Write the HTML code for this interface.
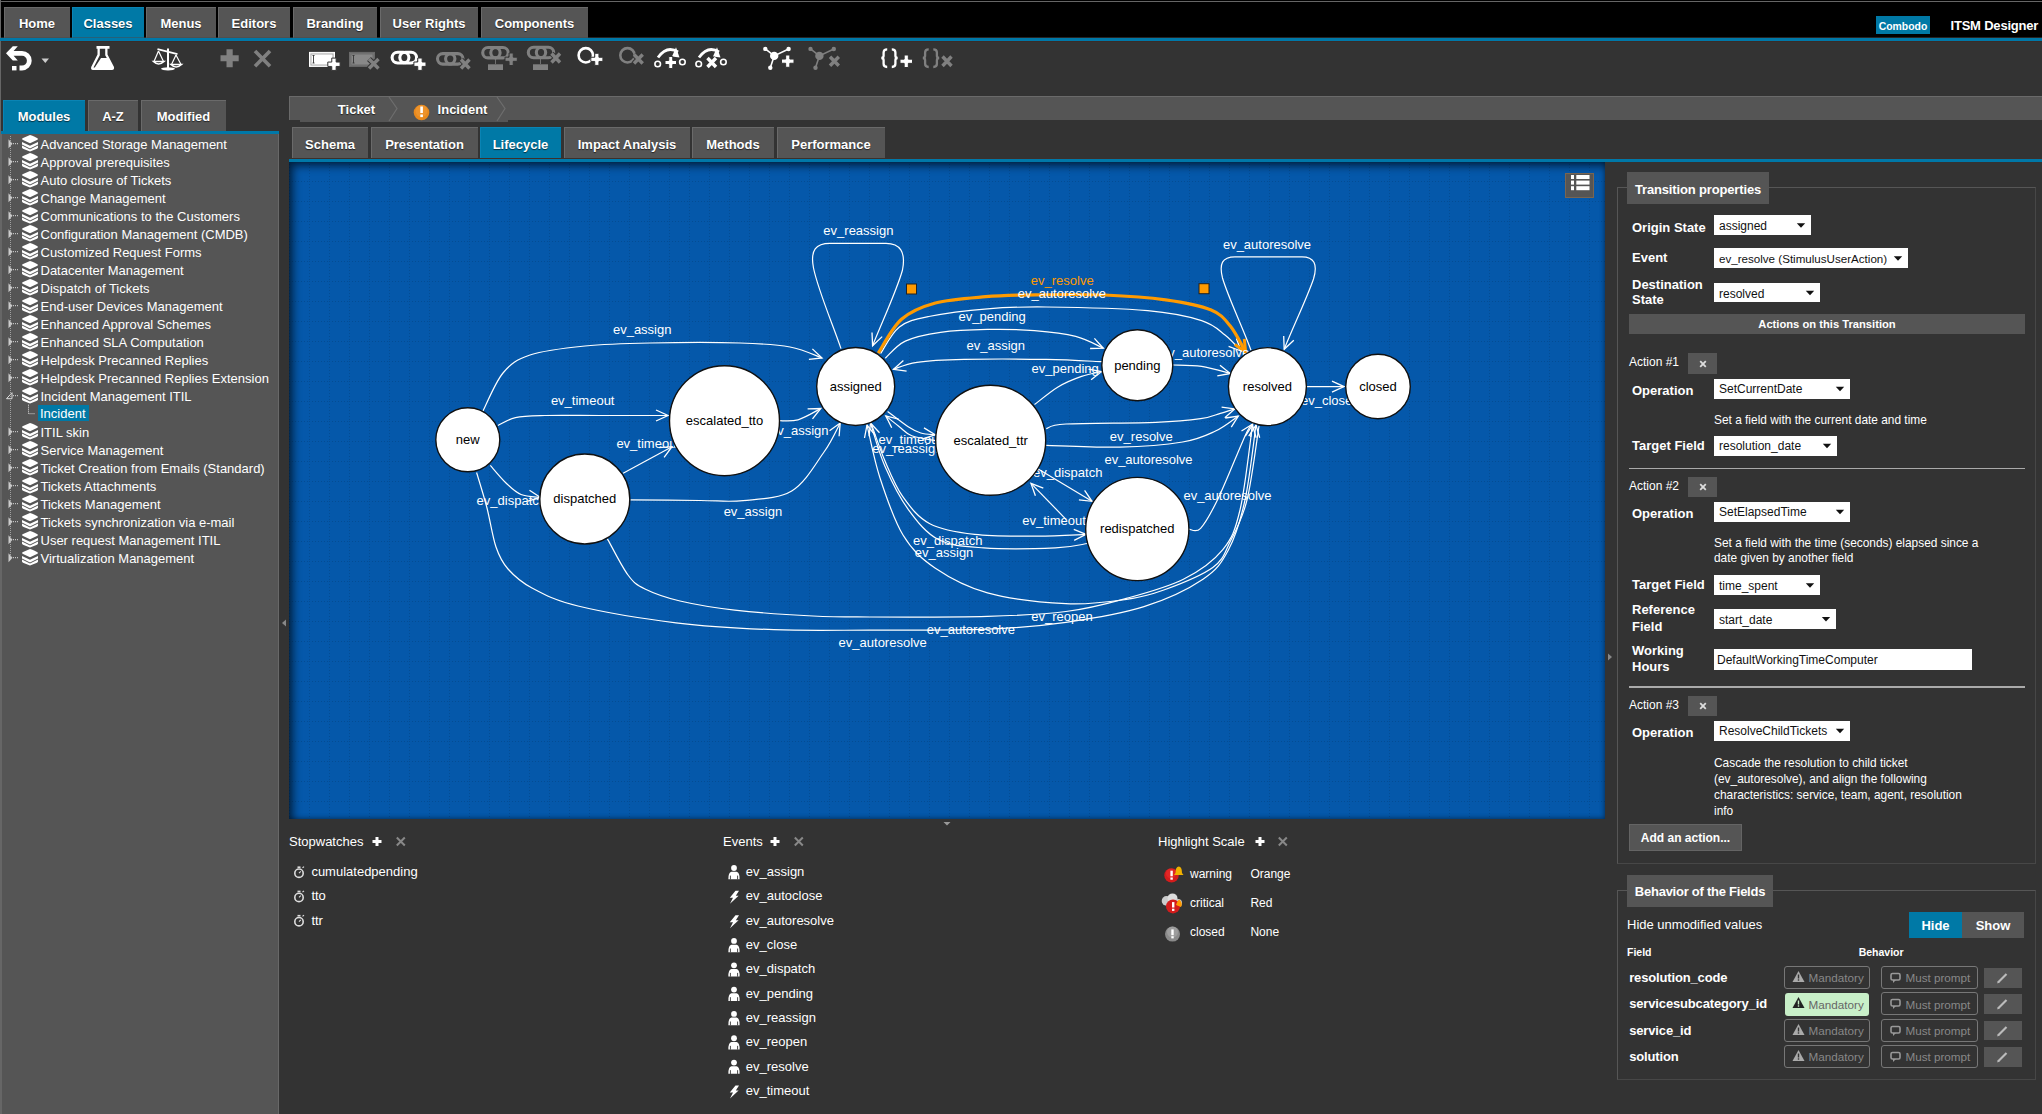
<!DOCTYPE html>
<html><head><meta charset="utf-8"><title>ITSM Designer</title>
<style>
html,body{margin:0;padding:0;}
body{width:2042px;height:1114px;overflow:hidden;position:relative;background:#333;font-family:'Liberation Sans',sans-serif;}
</style></head><body>
<div style="position:absolute;left:0px;top:0px;width:2042px;height:38px;background:#000"></div>
<div style="position:absolute;left:0px;top:1px;width:2042px;height:1px;background:#666"></div>
<div style="position:absolute;left:0px;top:0px;width:1px;height:1114px;background:#666"></div>
<div style="position:absolute;left:4px;top:7px;width:66px;height:31px;background:#555;border-top:1px solid #6a6a6a;border-left:1px solid #6a6a6a;box-sizing:border-box"></div>
<div style="position:absolute;left:-363.00px;top:16.80px;width:800px;text-align:center;font:bold 13px/13px 'Liberation Sans', sans-serif;color:#fff;white-space:nowrap;text-shadow:0 1px 1px rgba(0,0,0,.6);">Home</div>
<div style="position:absolute;left:72px;top:7px;width:72px;height:31px;background:#0079a6;border-top:1px solid #0a84b4;border-left:1px solid #0a84b4;box-sizing:border-box"></div>
<div style="position:absolute;left:-292.00px;top:16.80px;width:800px;text-align:center;font:bold 13px/13px 'Liberation Sans', sans-serif;color:#fff;white-space:nowrap;text-shadow:0 1px 1px rgba(0,0,0,.6);">Classes</div>
<div style="position:absolute;left:146px;top:7px;width:70px;height:31px;background:#555;border-top:1px solid #6a6a6a;border-left:1px solid #6a6a6a;box-sizing:border-box"></div>
<div style="position:absolute;left:-219.00px;top:16.80px;width:800px;text-align:center;font:bold 13px/13px 'Liberation Sans', sans-serif;color:#fff;white-space:nowrap;text-shadow:0 1px 1px rgba(0,0,0,.6);">Menus</div>
<div style="position:absolute;left:218px;top:7px;width:72px;height:31px;background:#555;border-top:1px solid #6a6a6a;border-left:1px solid #6a6a6a;box-sizing:border-box"></div>
<div style="position:absolute;left:-146.00px;top:16.80px;width:800px;text-align:center;font:bold 13px/13px 'Liberation Sans', sans-serif;color:#fff;white-space:nowrap;text-shadow:0 1px 1px rgba(0,0,0,.6);">Editors</div>
<div style="position:absolute;left:293px;top:7px;width:84px;height:31px;background:#555;border-top:1px solid #6a6a6a;border-left:1px solid #6a6a6a;box-sizing:border-box"></div>
<div style="position:absolute;left:-65.00px;top:16.80px;width:800px;text-align:center;font:bold 13px/13px 'Liberation Sans', sans-serif;color:#fff;white-space:nowrap;text-shadow:0 1px 1px rgba(0,0,0,.6);">Branding</div>
<div style="position:absolute;left:380px;top:7px;width:98px;height:31px;background:#555;border-top:1px solid #6a6a6a;border-left:1px solid #6a6a6a;box-sizing:border-box"></div>
<div style="position:absolute;left:29.00px;top:16.80px;width:800px;text-align:center;font:bold 13px/13px 'Liberation Sans', sans-serif;color:#fff;white-space:nowrap;text-shadow:0 1px 1px rgba(0,0,0,.6);">User Rights</div>
<div style="position:absolute;left:481px;top:7px;width:107px;height:31px;background:#555;border-top:1px solid #6a6a6a;border-left:1px solid #6a6a6a;box-sizing:border-box"></div>
<div style="position:absolute;left:134.50px;top:16.80px;width:800px;text-align:center;font:bold 13px/13px 'Liberation Sans', sans-serif;color:#fff;white-space:nowrap;text-shadow:0 1px 1px rgba(0,0,0,.6);">Components</div>
<div style="position:absolute;left:0px;top:38px;width:2042px;height:3px;background:#0078a8"></div>
<div style="position:absolute;left:1px;top:37px;width:2041px;height:1px;background:#4a4a4a;opacity:.5"></div>
<div style="position:absolute;left:1px;top:41px;width:2041px;height:1px;background:#3a2c28"></div>
<div style="position:absolute;left:1876px;top:16px;width:54px;height:18px;background:#0079a6"></div>
<div style="position:absolute;left:1503.00px;top:21.50px;width:800px;text-align:center;font:bold 10.4px/10.4px 'Liberation Sans', sans-serif;color:#fff;white-space:nowrap;">Combodo</div>
<div style="position:absolute;left:1950.50px;top:19.00px;font:bold 13px/13px 'Liberation Sans', sans-serif;color:#fff;white-space:nowrap;letter-spacing:-0.2px">ITSM Designer</div>
<svg style="position:absolute;left:0px;top:42px;" width="980" height="40" viewBox="0 42 980 40"><path d="M6 53.3 L12.8 46.2 L17.8 46.2 L13.6 51 L22 51 A9.6 9.6 0 0 1 22 70.4 L19.5 70.4 L19.5 65.6 L22 65.6 A4.9 4.9 0 0 0 22 55.8 L13.6 55.8 L17.8 60.4 L12.8 60.4 Z" fill="#fff"/><rect x="12" y="66" width="4.5" height="4.4" fill="#fff"/><path d="M41.5 58.5 L49 58.5 L45.3 63 Z" fill="#ccc"/><path d="M96.5 46 H109.5 V48.8 H107.5 V54.5 L114 67 Q114.5 70 112 70 H93 Q90.5 70 91.2 67 L97.5 54.5 V48.8 H96.5 Z" fill="#fff"/><path d="M99.8 48.8 H105.2 V55.2 L106.8 58 L101 58 L94.8 67.6 L93.5 67.6 L99.8 55.2 Z" fill="#333"/><rect x="167" y="48.5" width="2" height="20" fill="#fff"/><ellipse cx="168" cy="68.8" rx="7" ry="1.6" fill="#fff"/><path d="M157.5 49.2 L177.5 54.2" stroke="#fff" stroke-width="1.8"/><path d="M158.5 51 L154 61.5 M158.5 51 L163.5 61.5 M176 55 L171.5 64.5 M176 55 L181 64.5" stroke="#fff" stroke-width="1.2" fill="none"/><path d="M153.5 61.5 Q158.5 66.5 164 61.5 Z M171 64.5 Q176 69.5 181.5 64.5 Z" fill="none" stroke="#fff" stroke-width="1.6"/><path d="M226.5 49.2 H232.7 V55.2 H238.7 V61.2 H232.7 V67.2 H226.5 V61.2 H220.5 V55.2 H226.5 Z" fill="#808080"/><path d="M255 51 L270 66.3 M270 51 L255 66.3" stroke="#808080" stroke-width="3.6"/><rect x="309.5" y="52.4" width="25" height="14" fill="#eee" stroke="#fff" stroke-width="1"/><rect x="311" y="54" width="22" height="11" fill="#fff" stroke="#999" stroke-width="0.8"/><path d="M313.5 55.5 V63 M312.5 55.5 H314.5 M312.5 63 H314.5" stroke="#333" stroke-width="0.9"/><path d="M331.75000000000006 58.1 H336.15000000000003 V62.05 H340.1 V66.45 H336.15000000000003 V70.4 H331.75000000000006 V66.45 H327.8 V62.05 H331.75000000000006 Z" fill="#fff" stroke="#333" stroke-width="1"/><rect x="349.5" y="52.4" width="25" height="14" fill="#777" stroke="#6a6a6a" stroke-width="1"/><rect x="351" y="54" width="22" height="11" fill="#888" stroke="#666" stroke-width="0.8"/><path d="M353.5 55.5 V63 M352.5 55.5 H354.5 M352.5 63 H354.5" stroke="#333" stroke-width="0.9"/><path d="M369.0 59.0 L378.5 68.5 M378.5 59.0 L369.0 68.5" stroke="#333" stroke-width="5.4"/><path d="M369.0 59.0 L378.5 68.5 M378.5 59.0 L369.0 68.5" stroke="#808080" stroke-width="3.4"/><rect x="392.1" y="52.199999999999996" width="16.80199999999998" height="10.799999999999999" rx="5.499999999999999" fill="none" stroke="#fff" stroke-width="3.1"/><rect x="399.798" y="52.199999999999996" width="16.80199999999998" height="10.799999999999999" rx="5.499999999999999" fill="none" stroke="#fff" stroke-width="3.1"/><path d="M417.75 58 H422.15 V62.0 H426 V66.4 H422.15 V70.4 H417.75 V66.4 H413.9 V62.0 H417.75 Z" fill="#fff" stroke="#333" stroke-width="1"/><rect x="437.5" y="53.599999999999994" width="17.422000000000015" height="10.500000000000009" rx="5.350000000000004" fill="none" stroke="#808080" stroke-width="3.1"/><rect x="445.578" y="53.599999999999994" width="17.422000000000015" height="10.500000000000009" rx="5.350000000000004" fill="none" stroke="#808080" stroke-width="3.1"/><path d="M461.0 59.5 L469.5 68.5 M469.5 59.5 L461.0 68.5" stroke="#333" stroke-width="5.4"/><path d="M461.0 59.5 L469.5 68.5 M469.5 59.5 L461.0 68.5" stroke="#808080" stroke-width="3.4"/><rect x="482.7" y="47.5" width="17.422000000000015" height="10.4" rx="5.3" fill="none" stroke="#808080" stroke-width="3.1"/><rect x="490.77799999999996" y="47.5" width="17.422000000000015" height="10.4" rx="5.3" fill="none" stroke="#808080" stroke-width="3.1"/><path d="M509.04999999999995 53 H513.25 V57.15 H517.3 V61.35 H513.25 V65.5 H509.04999999999995 V61.35 H505 V57.15 H509.04999999999995 Z" fill="#808080" stroke="#333" stroke-width="1"/><rect x="488" y="64.3" width="15" height="5.7" fill="#808080"/><path d="M495.5 59 V64" stroke="#808080" stroke-width="0.8"/><rect x="528.3" y="47.3" width="17.36" height="10.4" rx="5.3" fill="none" stroke="#808080" stroke-width="3.1"/><rect x="536.34" y="47.3" width="17.36" height="10.4" rx="5.3" fill="none" stroke="#808080" stroke-width="3.1"/><path d="M551.5 53.5 L560.0 62.5 M560.0 53.5 L551.5 62.5" stroke="#333" stroke-width="5.4"/><path d="M551.5 53.5 L560.0 62.5 M560.0 53.5 L551.5 62.5" stroke="#808080" stroke-width="3.4"/><rect x="533" y="64.3" width="15" height="5.7" fill="#808080"/><path d="M540.5 59 V64" stroke="#808080" stroke-width="0.8"/><circle cx="585.8" cy="55.3" r="7.2" fill="none" stroke="#fff" stroke-width="2.6"/><path d="M594.7499999999999 53.3 H598.9499999999999 V57.25 H602.9 V61.45 H598.9499999999999 V65.4 H594.7499999999999 V61.45 H590.8 V57.25 H594.7499999999999 Z" fill="#fff" stroke="#333" stroke-width="1"/><circle cx="627.5" cy="55.3" r="7.2" fill="none" stroke="#808080" stroke-width="2.6"/><path d="M634.0 54.5 L642.7 63.5 M642.7 54.5 L634.0 63.5" stroke="#333" stroke-width="5.4"/><path d="M634.0 54.5 L642.7 63.5 M642.7 54.5 L634.0 63.5" stroke="#808080" stroke-width="3.4"/><path d="M658 57.5 Q667 45 678 52" fill="none" stroke="#fff" stroke-width="2.8"/><path d="M676 47.3 L679.5 57.5 L672 56.5 Z" fill="#fff"/><circle cx="657.7" cy="64" r="2.8" fill="none" stroke="#fff" stroke-width="1.6"/><circle cx="682.4" cy="62" r="2.8" fill="none" stroke="#fff" stroke-width="1.6"/><path d="M668.75 56.5 H672.75 V60.5 H676.5 V64.5 H672.75 V68.5 H668.75 V64.5 H665 V60.5 H668.75 Z" fill="#fff" stroke="#333" stroke-width="1"/><path d="M699 57.5 Q708 45 719 52" fill="none" stroke="#fff" stroke-width="2.8"/><path d="M717 47.3 L720.5 57.5 L713 56.5 Z" fill="#fff"/><circle cx="698.7" cy="64" r="2.8" fill="none" stroke="#fff" stroke-width="1.6"/><circle cx="723.4" cy="62" r="2.8" fill="none" stroke="#fff" stroke-width="1.6"/><path d="M707.5 58.0 L716.0 67.0 M716.0 58.0 L707.5 67.0" stroke="#333" stroke-width="5.4"/><path d="M707.5 58.0 L716.0 67.0 M716.0 58.0 L707.5 67.0" stroke="#fff" stroke-width="3.4"/><path d="M765.3 48.9 L774.2 55.9 L788.6 49 M774.2 55.9 L770.3 67.8" fill="none" stroke="#fff" stroke-width="1.6"/><circle cx="774.2" cy="55.9" r="4.2" fill="#fff"/><circle cx="765.3" cy="48.9" r="2.2" fill="#fff"/><circle cx="788.6" cy="49" r="2.2" fill="#fff"/><circle cx="770.3" cy="67.8" r="2.2" fill="#fff"/><path d="M785.65 55 H789.85 V59.05 H794 V63.25 H789.85 V67.3 H785.65 V63.25 H781.5 V59.05 H785.65 Z" fill="#fff" stroke="#333" stroke-width="1"/><path d="M810.5 48.9 L819.4000000000001 55.9 L833.8000000000001 49 M819.4000000000001 55.9 L815.5 67.8" fill="none" stroke="#808080" stroke-width="1.6"/><circle cx="819.4000000000001" cy="55.9" r="4.2" fill="#808080"/><circle cx="810.5" cy="48.9" r="2.2" fill="#808080"/><circle cx="833.8000000000001" cy="49" r="2.2" fill="#808080"/><circle cx="815.5" cy="67.8" r="2.2" fill="#808080"/><path d="M830.0 56.8 L838.8 65.8 M838.8 56.8 L830.0 65.8" stroke="#333" stroke-width="5.4"/><path d="M830.0 56.8 L838.8 65.8 M838.8 56.8 L830.0 65.8" stroke="#808080" stroke-width="3.4"/><path d="M887.2 49.3 Q883.6 49.3 883.6 52.5 L883.6 55.8 Q883.6 58 881.3 58 Q883.6 58 883.6 60.2 L883.6 63.8 Q883.6 67 887.2 67" fill="none" stroke="#fff" stroke-width="2.3"/><path d="M891.8 49.3 Q895.4 49.3 895.4 52.5 L895.4 55.8 Q895.4 58 897.7 58 Q895.4 58 895.4 60.2 L895.4 63.8 Q895.4 67 891.8 67" fill="none" stroke="#fff" stroke-width="2.3"/><path d="M904.15 55 H908.35 V59.15 H912.5 V63.35 H908.35 V67.5 H904.15 V63.35 H900 V59.15 H904.15 Z" fill="#fff" stroke="#333" stroke-width="1"/><path d="M928.7 49.3 Q925.1 49.3 925.1 52.5 L925.1 55.8 Q925.1 58 922.8 58 Q925.1 58 925.1 60.2 L925.1 63.8 Q925.1 67 928.7 67" fill="none" stroke="#808080" stroke-width="2.3"/><path d="M933.3 49.3 Q936.9 49.3 936.9 52.5 L936.9 55.8 Q936.9 58 939.2 58 Q936.9 58 936.9 60.2 L936.9 63.8 Q936.9 67 933.3 67" fill="none" stroke="#808080" stroke-width="2.3"/><path d="M942.5 56.5 L951.5 66.0 M951.5 56.5 L942.5 66.0" stroke="#333" stroke-width="5.4"/><path d="M942.5 56.5 L951.5 66.0 M951.5 56.5 L942.5 66.0" stroke="#808080" stroke-width="3.4"/></svg>
<div style="position:absolute;left:3px;top:100px;width:82px;height:31px;background:#0079a6;border-top:1px solid #0a84b4;border-left:1px solid #0a84b4;box-sizing:border-box"></div>
<div style="position:absolute;left:-356.00px;top:109.50px;width:800px;text-align:center;font:bold 13px/13px 'Liberation Sans', sans-serif;color:#fff;white-space:nowrap;text-shadow:0 1px 1px rgba(0,0,0,.6);">Modules</div>
<div style="position:absolute;left:88px;top:100px;width:50px;height:31px;background:#555;border-top:1px solid #6a6a6a;border-left:1px solid #6a6a6a;box-sizing:border-box"></div>
<div style="position:absolute;left:-287.00px;top:109.50px;width:800px;text-align:center;font:bold 13px/13px 'Liberation Sans', sans-serif;color:#fff;white-space:nowrap;text-shadow:0 1px 1px rgba(0,0,0,.6);">A-Z</div>
<div style="position:absolute;left:141px;top:100px;width:85px;height:31px;background:#555;border-top:1px solid #6a6a6a;border-left:1px solid #6a6a6a;box-sizing:border-box"></div>
<div style="position:absolute;left:-216.50px;top:109.50px;width:800px;text-align:center;font:bold 13px/13px 'Liberation Sans', sans-serif;color:#fff;white-space:nowrap;text-shadow:0 1px 1px rgba(0,0,0,.6);">Modified</div>
<div style="position:absolute;left:1px;top:131px;width:278px;height:3px;background:#0078a8"></div>
<div style="position:absolute;left:1px;top:134px;width:278px;height:980px;background:#555"></div>
<div style="position:absolute;left:0px;top:134px;width:2px;height:980px;background:#666"></div>
<div style="position:absolute;left:278px;top:134px;width:1px;height:980px;background:#686868"></div>
<div style="position:absolute;left:40.50px;top:137.70px;font:normal 13px/13px 'Liberation Sans', sans-serif;color:#fff;white-space:nowrap;">Advanced Storage Management</div>
<div style="position:absolute;left:40.50px;top:155.70px;font:normal 13px/13px 'Liberation Sans', sans-serif;color:#fff;white-space:nowrap;">Approval prerequisites</div>
<div style="position:absolute;left:40.50px;top:173.70px;font:normal 13px/13px 'Liberation Sans', sans-serif;color:#fff;white-space:nowrap;">Auto closure of Tickets</div>
<div style="position:absolute;left:40.50px;top:191.70px;font:normal 13px/13px 'Liberation Sans', sans-serif;color:#fff;white-space:nowrap;">Change Management</div>
<div style="position:absolute;left:40.50px;top:209.70px;font:normal 13px/13px 'Liberation Sans', sans-serif;color:#fff;white-space:nowrap;">Communications to the Customers</div>
<div style="position:absolute;left:40.50px;top:227.70px;font:normal 13px/13px 'Liberation Sans', sans-serif;color:#fff;white-space:nowrap;">Configuration Management (CMDB)</div>
<div style="position:absolute;left:40.50px;top:245.70px;font:normal 13px/13px 'Liberation Sans', sans-serif;color:#fff;white-space:nowrap;">Customized Request Forms</div>
<div style="position:absolute;left:40.50px;top:263.70px;font:normal 13px/13px 'Liberation Sans', sans-serif;color:#fff;white-space:nowrap;">Datacenter Management</div>
<div style="position:absolute;left:40.50px;top:281.70px;font:normal 13px/13px 'Liberation Sans', sans-serif;color:#fff;white-space:nowrap;">Dispatch of Tickets</div>
<div style="position:absolute;left:40.50px;top:299.70px;font:normal 13px/13px 'Liberation Sans', sans-serif;color:#fff;white-space:nowrap;">End-user Devices Management</div>
<div style="position:absolute;left:40.50px;top:317.70px;font:normal 13px/13px 'Liberation Sans', sans-serif;color:#fff;white-space:nowrap;">Enhanced Approval Schemes</div>
<div style="position:absolute;left:40.50px;top:335.70px;font:normal 13px/13px 'Liberation Sans', sans-serif;color:#fff;white-space:nowrap;">Enhanced SLA Computation</div>
<div style="position:absolute;left:40.50px;top:353.70px;font:normal 13px/13px 'Liberation Sans', sans-serif;color:#fff;white-space:nowrap;">Helpdesk Precanned Replies</div>
<div style="position:absolute;left:40.50px;top:371.70px;font:normal 13px/13px 'Liberation Sans', sans-serif;color:#fff;white-space:nowrap;">Helpdesk Precanned Replies Extension</div>
<div style="position:absolute;left:40.50px;top:389.70px;font:normal 13px/13px 'Liberation Sans', sans-serif;color:#fff;white-space:nowrap;">Incident Management ITIL</div>
<div style="position:absolute;left:38px;top:404.5px;width:51px;height:16px;background:#0079a6"></div>
<div style="position:absolute;left:40.00px;top:406.70px;font:normal 13px/13px 'Liberation Sans', sans-serif;color:#fff;white-space:nowrap;">Incident</div>
<div style="position:absolute;left:40.50px;top:425.70px;font:normal 13px/13px 'Liberation Sans', sans-serif;color:#fff;white-space:nowrap;">ITIL skin</div>
<div style="position:absolute;left:40.50px;top:443.70px;font:normal 13px/13px 'Liberation Sans', sans-serif;color:#fff;white-space:nowrap;">Service Management</div>
<div style="position:absolute;left:40.50px;top:461.70px;font:normal 13px/13px 'Liberation Sans', sans-serif;color:#fff;white-space:nowrap;">Ticket Creation from Emails (Standard)</div>
<div style="position:absolute;left:40.50px;top:479.70px;font:normal 13px/13px 'Liberation Sans', sans-serif;color:#fff;white-space:nowrap;">Tickets Attachments</div>
<div style="position:absolute;left:40.50px;top:497.70px;font:normal 13px/13px 'Liberation Sans', sans-serif;color:#fff;white-space:nowrap;">Tickets Management</div>
<div style="position:absolute;left:40.50px;top:515.70px;font:normal 13px/13px 'Liberation Sans', sans-serif;color:#fff;white-space:nowrap;">Tickets synchronization via e-mail</div>
<div style="position:absolute;left:40.50px;top:533.70px;font:normal 13px/13px 'Liberation Sans', sans-serif;color:#fff;white-space:nowrap;">User request Management ITIL</div>
<div style="position:absolute;left:40.50px;top:551.70px;font:normal 13px/13px 'Liberation Sans', sans-serif;color:#fff;white-space:nowrap;">Virtualization Management</div>
<svg style="position:absolute;left:0px;top:134px;" width="279" height="440" viewBox="0 134 279 440"><path d="M30 135.0 Q31 135.0 37.5 138.2 Q38.3 139.0 37.5 139.8 L30 143.2 L22.5 139.8 Q21.7 139.0 22.5 138.2 Z" fill="#fff"/><path d="M22 142.0 L30 145.8 L38 142.0 L38 144.6 L30 148.4 L22 144.6 Z" fill="#fff"/><path d="M22 145.6 L30 149.4 L38 145.6 L38 147.6 Q38 148.2 37 148.7 L30 151.6 L23 148.7 Q22 148.2 22 147.6 Z" fill="#fff"/><path d="M13 143.7 H18" stroke="#ddd" stroke-width="1" stroke-dasharray="1 1"/><path d="M8.5 139.2 L12.5 143.7 L8.5 148.2 Z" fill="#ccc"/><path d="M30 153.0 Q31 153.0 37.5 156.2 Q38.3 157.0 37.5 157.8 L30 161.2 L22.5 157.8 Q21.7 157.0 22.5 156.2 Z" fill="#fff"/><path d="M22 160.0 L30 163.8 L38 160.0 L38 162.6 L30 166.4 L22 162.6 Z" fill="#fff"/><path d="M22 163.6 L30 167.4 L38 163.6 L38 165.6 Q38 166.2 37 166.7 L30 169.6 L23 166.7 Q22 166.2 22 165.6 Z" fill="#fff"/><path d="M13 161.7 H18" stroke="#ddd" stroke-width="1" stroke-dasharray="1 1"/><path d="M8.5 157.2 L12.5 161.7 L8.5 166.2 Z" fill="#ccc"/><path d="M30 171.0 Q31 171.0 37.5 174.2 Q38.3 175.0 37.5 175.8 L30 179.2 L22.5 175.8 Q21.7 175.0 22.5 174.2 Z" fill="#fff"/><path d="M22 178.0 L30 181.8 L38 178.0 L38 180.6 L30 184.4 L22 180.6 Z" fill="#fff"/><path d="M22 181.6 L30 185.4 L38 181.6 L38 183.6 Q38 184.2 37 184.7 L30 187.6 L23 184.7 Q22 184.2 22 183.6 Z" fill="#fff"/><path d="M13 179.7 H18" stroke="#ddd" stroke-width="1" stroke-dasharray="1 1"/><path d="M8.5 175.2 L12.5 179.7 L8.5 184.2 Z" fill="#ccc"/><path d="M30 189.0 Q31 189.0 37.5 192.2 Q38.3 193.0 37.5 193.8 L30 197.2 L22.5 193.8 Q21.7 193.0 22.5 192.2 Z" fill="#fff"/><path d="M22 196.0 L30 199.8 L38 196.0 L38 198.6 L30 202.4 L22 198.6 Z" fill="#fff"/><path d="M22 199.6 L30 203.4 L38 199.6 L38 201.6 Q38 202.2 37 202.7 L30 205.6 L23 202.7 Q22 202.2 22 201.6 Z" fill="#fff"/><path d="M13 197.7 H18" stroke="#ddd" stroke-width="1" stroke-dasharray="1 1"/><path d="M8.5 193.2 L12.5 197.7 L8.5 202.2 Z" fill="#ccc"/><path d="M30 207.0 Q31 207.0 37.5 210.2 Q38.3 211.0 37.5 211.8 L30 215.2 L22.5 211.8 Q21.7 211.0 22.5 210.2 Z" fill="#fff"/><path d="M22 214.0 L30 217.8 L38 214.0 L38 216.6 L30 220.4 L22 216.6 Z" fill="#fff"/><path d="M22 217.6 L30 221.4 L38 217.6 L38 219.6 Q38 220.2 37 220.7 L30 223.6 L23 220.7 Q22 220.2 22 219.6 Z" fill="#fff"/><path d="M13 215.7 H18" stroke="#ddd" stroke-width="1" stroke-dasharray="1 1"/><path d="M8.5 211.2 L12.5 215.7 L8.5 220.2 Z" fill="#ccc"/><path d="M30 225.0 Q31 225.0 37.5 228.2 Q38.3 229.0 37.5 229.8 L30 233.2 L22.5 229.8 Q21.7 229.0 22.5 228.2 Z" fill="#fff"/><path d="M22 232.0 L30 235.8 L38 232.0 L38 234.6 L30 238.4 L22 234.6 Z" fill="#fff"/><path d="M22 235.6 L30 239.4 L38 235.6 L38 237.6 Q38 238.2 37 238.7 L30 241.6 L23 238.7 Q22 238.2 22 237.6 Z" fill="#fff"/><path d="M13 233.7 H18" stroke="#ddd" stroke-width="1" stroke-dasharray="1 1"/><path d="M8.5 229.2 L12.5 233.7 L8.5 238.2 Z" fill="#ccc"/><path d="M30 243.0 Q31 243.0 37.5 246.2 Q38.3 247.0 37.5 247.8 L30 251.2 L22.5 247.8 Q21.7 247.0 22.5 246.2 Z" fill="#fff"/><path d="M22 250.0 L30 253.8 L38 250.0 L38 252.6 L30 256.4 L22 252.6 Z" fill="#fff"/><path d="M22 253.6 L30 257.4 L38 253.6 L38 255.6 Q38 256.2 37 256.7 L30 259.6 L23 256.7 Q22 256.2 22 255.6 Z" fill="#fff"/><path d="M13 251.7 H18" stroke="#ddd" stroke-width="1" stroke-dasharray="1 1"/><path d="M8.5 247.2 L12.5 251.7 L8.5 256.2 Z" fill="#ccc"/><path d="M30 261.0 Q31 261.0 37.5 264.2 Q38.3 265.0 37.5 265.8 L30 269.2 L22.5 265.8 Q21.7 265.0 22.5 264.2 Z" fill="#fff"/><path d="M22 268.0 L30 271.8 L38 268.0 L38 270.6 L30 274.4 L22 270.6 Z" fill="#fff"/><path d="M22 271.6 L30 275.4 L38 271.6 L38 273.6 Q38 274.2 37 274.7 L30 277.6 L23 274.7 Q22 274.2 22 273.6 Z" fill="#fff"/><path d="M13 269.7 H18" stroke="#ddd" stroke-width="1" stroke-dasharray="1 1"/><path d="M8.5 265.2 L12.5 269.7 L8.5 274.2 Z" fill="#ccc"/><path d="M30 279.0 Q31 279.0 37.5 282.2 Q38.3 283.0 37.5 283.8 L30 287.2 L22.5 283.8 Q21.7 283.0 22.5 282.2 Z" fill="#fff"/><path d="M22 286.0 L30 289.8 L38 286.0 L38 288.6 L30 292.4 L22 288.6 Z" fill="#fff"/><path d="M22 289.6 L30 293.4 L38 289.6 L38 291.6 Q38 292.2 37 292.7 L30 295.6 L23 292.7 Q22 292.2 22 291.6 Z" fill="#fff"/><path d="M13 287.7 H18" stroke="#ddd" stroke-width="1" stroke-dasharray="1 1"/><path d="M8.5 283.2 L12.5 287.7 L8.5 292.2 Z" fill="#ccc"/><path d="M30 297.0 Q31 297.0 37.5 300.2 Q38.3 301.0 37.5 301.8 L30 305.2 L22.5 301.8 Q21.7 301.0 22.5 300.2 Z" fill="#fff"/><path d="M22 304.0 L30 307.8 L38 304.0 L38 306.6 L30 310.4 L22 306.6 Z" fill="#fff"/><path d="M22 307.6 L30 311.4 L38 307.6 L38 309.6 Q38 310.2 37 310.7 L30 313.6 L23 310.7 Q22 310.2 22 309.6 Z" fill="#fff"/><path d="M13 305.7 H18" stroke="#ddd" stroke-width="1" stroke-dasharray="1 1"/><path d="M8.5 301.2 L12.5 305.7 L8.5 310.2 Z" fill="#ccc"/><path d="M30 315.0 Q31 315.0 37.5 318.2 Q38.3 319.0 37.5 319.8 L30 323.2 L22.5 319.8 Q21.7 319.0 22.5 318.2 Z" fill="#fff"/><path d="M22 322.0 L30 325.8 L38 322.0 L38 324.6 L30 328.4 L22 324.6 Z" fill="#fff"/><path d="M22 325.6 L30 329.4 L38 325.6 L38 327.6 Q38 328.2 37 328.7 L30 331.6 L23 328.7 Q22 328.2 22 327.6 Z" fill="#fff"/><path d="M13 323.7 H18" stroke="#ddd" stroke-width="1" stroke-dasharray="1 1"/><path d="M8.5 319.2 L12.5 323.7 L8.5 328.2 Z" fill="#ccc"/><path d="M30 333.0 Q31 333.0 37.5 336.2 Q38.3 337.0 37.5 337.8 L30 341.2 L22.5 337.8 Q21.7 337.0 22.5 336.2 Z" fill="#fff"/><path d="M22 340.0 L30 343.8 L38 340.0 L38 342.6 L30 346.4 L22 342.6 Z" fill="#fff"/><path d="M22 343.6 L30 347.4 L38 343.6 L38 345.6 Q38 346.2 37 346.7 L30 349.6 L23 346.7 Q22 346.2 22 345.6 Z" fill="#fff"/><path d="M13 341.7 H18" stroke="#ddd" stroke-width="1" stroke-dasharray="1 1"/><path d="M8.5 337.2 L12.5 341.7 L8.5 346.2 Z" fill="#ccc"/><path d="M30 351.0 Q31 351.0 37.5 354.2 Q38.3 355.0 37.5 355.8 L30 359.2 L22.5 355.8 Q21.7 355.0 22.5 354.2 Z" fill="#fff"/><path d="M22 358.0 L30 361.8 L38 358.0 L38 360.6 L30 364.4 L22 360.6 Z" fill="#fff"/><path d="M22 361.6 L30 365.4 L38 361.6 L38 363.6 Q38 364.2 37 364.7 L30 367.6 L23 364.7 Q22 364.2 22 363.6 Z" fill="#fff"/><path d="M13 359.7 H18" stroke="#ddd" stroke-width="1" stroke-dasharray="1 1"/><path d="M8.5 355.2 L12.5 359.7 L8.5 364.2 Z" fill="#ccc"/><path d="M30 369.0 Q31 369.0 37.5 372.2 Q38.3 373.0 37.5 373.8 L30 377.2 L22.5 373.8 Q21.7 373.0 22.5 372.2 Z" fill="#fff"/><path d="M22 376.0 L30 379.8 L38 376.0 L38 378.6 L30 382.4 L22 378.6 Z" fill="#fff"/><path d="M22 379.6 L30 383.4 L38 379.6 L38 381.6 Q38 382.2 37 382.7 L30 385.6 L23 382.7 Q22 382.2 22 381.6 Z" fill="#fff"/><path d="M13 377.7 H18" stroke="#ddd" stroke-width="1" stroke-dasharray="1 1"/><path d="M8.5 373.2 L12.5 377.7 L8.5 382.2 Z" fill="#ccc"/><path d="M30 387.0 Q31 387.0 37.5 390.2 Q38.3 391.0 37.5 391.8 L30 395.2 L22.5 391.8 Q21.7 391.0 22.5 390.2 Z" fill="#fff"/><path d="M22 394.0 L30 397.8 L38 394.0 L38 396.6 L30 400.4 L22 396.6 Z" fill="#fff"/><path d="M22 397.6 L30 401.4 L38 397.6 L38 399.6 Q38 400.2 37 400.7 L30 403.6 L23 400.7 Q22 400.2 22 399.6 Z" fill="#fff"/><path d="M13 395.7 H18" stroke="#ddd" stroke-width="1" stroke-dasharray="1 1"/><path d="M6.5 398.7 L12 398.7 L12 392.7 Z" fill="none" stroke="#ddd" stroke-width="1"/><path d="M28.5 404.7 V413.7 H35" stroke="#ddd" stroke-width="1" stroke-dasharray="1 1" fill="none"/><path d="M30 423.0 Q31 423.0 37.5 426.2 Q38.3 427.0 37.5 427.8 L30 431.2 L22.5 427.8 Q21.7 427.0 22.5 426.2 Z" fill="#fff"/><path d="M22 430.0 L30 433.8 L38 430.0 L38 432.6 L30 436.4 L22 432.6 Z" fill="#fff"/><path d="M22 433.6 L30 437.4 L38 433.6 L38 435.6 Q38 436.2 37 436.7 L30 439.6 L23 436.7 Q22 436.2 22 435.6 Z" fill="#fff"/><path d="M13 431.7 H18" stroke="#ddd" stroke-width="1" stroke-dasharray="1 1"/><path d="M8.5 427.2 L12.5 431.7 L8.5 436.2 Z" fill="#ccc"/><path d="M30 441.0 Q31 441.0 37.5 444.2 Q38.3 445.0 37.5 445.8 L30 449.2 L22.5 445.8 Q21.7 445.0 22.5 444.2 Z" fill="#fff"/><path d="M22 448.0 L30 451.8 L38 448.0 L38 450.6 L30 454.4 L22 450.6 Z" fill="#fff"/><path d="M22 451.6 L30 455.4 L38 451.6 L38 453.6 Q38 454.2 37 454.7 L30 457.6 L23 454.7 Q22 454.2 22 453.6 Z" fill="#fff"/><path d="M13 449.7 H18" stroke="#ddd" stroke-width="1" stroke-dasharray="1 1"/><path d="M8.5 445.2 L12.5 449.7 L8.5 454.2 Z" fill="#ccc"/><path d="M30 459.0 Q31 459.0 37.5 462.2 Q38.3 463.0 37.5 463.8 L30 467.2 L22.5 463.8 Q21.7 463.0 22.5 462.2 Z" fill="#fff"/><path d="M22 466.0 L30 469.8 L38 466.0 L38 468.6 L30 472.4 L22 468.6 Z" fill="#fff"/><path d="M22 469.6 L30 473.4 L38 469.6 L38 471.6 Q38 472.2 37 472.7 L30 475.6 L23 472.7 Q22 472.2 22 471.6 Z" fill="#fff"/><path d="M13 467.7 H18" stroke="#ddd" stroke-width="1" stroke-dasharray="1 1"/><path d="M8.5 463.2 L12.5 467.7 L8.5 472.2 Z" fill="#ccc"/><path d="M30 477.0 Q31 477.0 37.5 480.2 Q38.3 481.0 37.5 481.8 L30 485.2 L22.5 481.8 Q21.7 481.0 22.5 480.2 Z" fill="#fff"/><path d="M22 484.0 L30 487.8 L38 484.0 L38 486.6 L30 490.4 L22 486.6 Z" fill="#fff"/><path d="M22 487.6 L30 491.4 L38 487.6 L38 489.6 Q38 490.2 37 490.7 L30 493.6 L23 490.7 Q22 490.2 22 489.6 Z" fill="#fff"/><path d="M13 485.7 H18" stroke="#ddd" stroke-width="1" stroke-dasharray="1 1"/><path d="M8.5 481.2 L12.5 485.7 L8.5 490.2 Z" fill="#ccc"/><path d="M30 495.0 Q31 495.0 37.5 498.2 Q38.3 499.0 37.5 499.8 L30 503.2 L22.5 499.8 Q21.7 499.0 22.5 498.2 Z" fill="#fff"/><path d="M22 502.0 L30 505.8 L38 502.0 L38 504.6 L30 508.4 L22 504.6 Z" fill="#fff"/><path d="M22 505.6 L30 509.4 L38 505.6 L38 507.6 Q38 508.2 37 508.7 L30 511.6 L23 508.7 Q22 508.2 22 507.6 Z" fill="#fff"/><path d="M13 503.7 H18" stroke="#ddd" stroke-width="1" stroke-dasharray="1 1"/><path d="M8.5 499.2 L12.5 503.7 L8.5 508.2 Z" fill="#ccc"/><path d="M30 513.0 Q31 513.0 37.5 516.2 Q38.3 517.0 37.5 517.8 L30 521.2 L22.5 517.8 Q21.7 517.0 22.5 516.2 Z" fill="#fff"/><path d="M22 520.0 L30 523.8 L38 520.0 L38 522.6 L30 526.4 L22 522.6 Z" fill="#fff"/><path d="M22 523.6 L30 527.4 L38 523.6 L38 525.6 Q38 526.2 37 526.7 L30 529.6 L23 526.7 Q22 526.2 22 525.6 Z" fill="#fff"/><path d="M13 521.7 H18" stroke="#ddd" stroke-width="1" stroke-dasharray="1 1"/><path d="M8.5 517.2 L12.5 521.7 L8.5 526.2 Z" fill="#ccc"/><path d="M30 531.0 Q31 531.0 37.5 534.2 Q38.3 535.0 37.5 535.8 L30 539.2 L22.5 535.8 Q21.7 535.0 22.5 534.2 Z" fill="#fff"/><path d="M22 538.0 L30 541.8 L38 538.0 L38 540.6 L30 544.4 L22 540.6 Z" fill="#fff"/><path d="M22 541.6 L30 545.4 L38 541.6 L38 543.6 Q38 544.2 37 544.7 L30 547.6 L23 544.7 Q22 544.2 22 543.6 Z" fill="#fff"/><path d="M13 539.7 H18" stroke="#ddd" stroke-width="1" stroke-dasharray="1 1"/><path d="M8.5 535.2 L12.5 539.7 L8.5 544.2 Z" fill="#ccc"/><path d="M30 549.0 Q31 549.0 37.5 552.2 Q38.3 553.0 37.5 553.8 L30 557.2 L22.5 553.8 Q21.7 553.0 22.5 552.2 Z" fill="#fff"/><path d="M22 556.0 L30 559.8 L38 556.0 L38 558.6 L30 562.4 L22 558.6 Z" fill="#fff"/><path d="M22 559.6 L30 563.4 L38 559.6 L38 561.6 Q38 562.2 37 562.7 L30 565.6 L23 562.7 Q22 562.2 22 561.6 Z" fill="#fff"/><path d="M13 557.7 H18" stroke="#ddd" stroke-width="1" stroke-dasharray="1 1"/><path d="M8.5 553.2 L12.5 557.7 L8.5 562.2 Z" fill="#ccc"/><path d="M10.5 136 V557.7" stroke="#bbb" stroke-width="1" stroke-dasharray="1 1" opacity=".75"/></svg>
<svg style="position:absolute;left:279px;top:610px;" width="10" height="26" viewBox="279 610 10 26"><path d="M286 619.5 L282 623 L286 626.5 Z" fill="#888"/></svg>
<div style="position:absolute;left:289px;top:96px;width:1753px;height:23.5px;background:#555;border-top:1px solid #6a6a6a;border-left:1px solid #6a6a6a;box-sizing:border-box"></div>
<div style="position:absolute;left:300px;top:119px;width:208px;height:3px;background:#555"></div>
<svg style="position:absolute;left:289px;top:96px;" width="260" height="28" viewBox="289 96 260 28"><path d="M389 97 L397 108.5 L389 121" stroke="#6e6e6e" stroke-width="1.2" fill="none"/><path d="M497 97 L505 108.5 L497 121" stroke="#6e6e6e" stroke-width="1.2" fill="none"/><circle cx="421.5" cy="112.5" r="7.8" fill="#e8891c"/><circle cx="421.5" cy="111" r="6" fill="#f09a35" opacity=".6"/><rect x="420.3" y="106.5" width="2.6" height="6.5" fill="#fff"/><rect x="420.3" y="114.5" width="2.6" height="2.6" fill="#fff"/></svg>
<div style="position:absolute;left:-43.50px;top:103.10px;width:800px;text-align:center;font:bold 13px/13px 'Liberation Sans', sans-serif;color:#fff;white-space:nowrap;text-shadow:0 1px 1px rgba(0,0,0,.6);">Ticket</div>
<div style="position:absolute;left:62.50px;top:103.10px;width:800px;text-align:center;font:bold 13px/13px 'Liberation Sans', sans-serif;color:#fff;white-space:nowrap;text-shadow:0 1px 1px rgba(0,0,0,.6);">Incident</div>
<div style="position:absolute;left:292px;top:127px;width:76px;height:31px;background:#555;border-top:1px solid #6a6a6a;border-left:1px solid #6a6a6a;box-sizing:border-box"></div>
<div style="position:absolute;left:-70.00px;top:137.90px;width:800px;text-align:center;font:bold 13px/13px 'Liberation Sans', sans-serif;color:#fff;white-space:nowrap;text-shadow:0 1px 1px rgba(0,0,0,.6);">Schema</div>
<div style="position:absolute;left:371px;top:127px;width:107px;height:31px;background:#555;border-top:1px solid #6a6a6a;border-left:1px solid #6a6a6a;box-sizing:border-box"></div>
<div style="position:absolute;left:24.50px;top:137.90px;width:800px;text-align:center;font:bold 13px/13px 'Liberation Sans', sans-serif;color:#fff;white-space:nowrap;text-shadow:0 1px 1px rgba(0,0,0,.6);">Presentation</div>
<div style="position:absolute;left:480px;top:127px;width:81px;height:31px;background:#0079a6;border-top:1px solid #0a84b4;border-left:1px solid #0a84b4;box-sizing:border-box"></div>
<div style="position:absolute;left:120.50px;top:137.90px;width:800px;text-align:center;font:bold 13px/13px 'Liberation Sans', sans-serif;color:#fff;white-space:nowrap;text-shadow:0 1px 1px rgba(0,0,0,.6);">Lifecycle</div>
<div style="position:absolute;left:564px;top:127px;width:126px;height:31px;background:#555;border-top:1px solid #6a6a6a;border-left:1px solid #6a6a6a;box-sizing:border-box"></div>
<div style="position:absolute;left:227.00px;top:137.90px;width:800px;text-align:center;font:bold 13px/13px 'Liberation Sans', sans-serif;color:#fff;white-space:nowrap;text-shadow:0 1px 1px rgba(0,0,0,.6);">Impact Analysis</div>
<div style="position:absolute;left:692px;top:127px;width:82px;height:31px;background:#555;border-top:1px solid #6a6a6a;border-left:1px solid #6a6a6a;box-sizing:border-box"></div>
<div style="position:absolute;left:333.00px;top:137.90px;width:800px;text-align:center;font:bold 13px/13px 'Liberation Sans', sans-serif;color:#fff;white-space:nowrap;text-shadow:0 1px 1px rgba(0,0,0,.6);">Methods</div>
<div style="position:absolute;left:777px;top:127px;width:108px;height:31px;background:#555;border-top:1px solid #6a6a6a;border-left:1px solid #6a6a6a;box-sizing:border-box"></div>
<div style="position:absolute;left:431.00px;top:137.90px;width:800px;text-align:center;font:bold 13px/13px 'Liberation Sans', sans-serif;color:#fff;white-space:nowrap;text-shadow:0 1px 1px rgba(0,0,0,.6);">Performance</div>
<div style="position:absolute;left:289px;top:158px;width:1753px;height:1px;background:#3d302b"></div>
<div style="position:absolute;left:289px;top:159px;width:1753px;height:3px;background:#0078a8"></div>
<svg style="position:absolute;left:289px;top:162px;" width="1316" height="657" viewBox="289 162 1316 657"><defs><pattern id="grid" x="289" y="161" width="20" height="20" patternUnits="userSpaceOnUse"><path d="M0 0.5 H20 M0.5 0 V20" stroke="#02417f" stroke-width="1" stroke-dasharray="1 2" opacity=".55"/></pattern></defs><rect x="289" y="162" width="1316" height="657" fill="#0558aa"/><rect x="289" y="162" width="1316" height="657" fill="url(#grid)"/><path d="M483.0 411.0 C486.3 404.7 495.2 382.3 503.0 373.0 C510.8 363.7 516.3 359.5 530.0 355.0 C543.7 350.5 565.0 348.0 585.0 346.0 C605.0 344.0 624.2 343.5 650.0 343.0 C675.8 342.5 716.7 342.3 740.0 343.0 C763.3 343.7 776.3 344.5 790.0 347.0 C803.7 349.5 816.7 356.2 822.0 358.0" fill="none" stroke="#fff" stroke-width="1.2"/><path d="M808.9 359.3 L822.0 358.0 L812.4 348.9" fill="none" stroke="#fff" stroke-width="1.3"/><path d="M498.0 425.5 C500.9 424.2 507.7 419.3 515.5 417.6 C523.3 415.9 530.9 415.9 545.0 415.5 C559.1 415.1 579.5 415.5 600.0 415.5 C620.5 415.5 656.7 415.5 668.0 415.5" fill="none" stroke="#fff" stroke-width="1.2"/><path d="M656.0 421.0 L668.0 415.5 L656.0 410.0" fill="none" stroke="#fff" stroke-width="1.3"/><path d="M490.3 465.4 C492.9 468.3 500.9 478.1 506.0 483.0 C511.1 487.9 515.2 492.1 521.0 494.5 C526.8 496.9 537.2 497.0 540.5 497.5" fill="none" stroke="#fff" stroke-width="1.2"/><path d="M527.8 501.1 L540.5 497.5 L529.5 490.2" fill="none" stroke="#fff" stroke-width="1.3"/><path d="M476.6 472.5 C478.3 478.4 483.8 495.6 487.0 508.0 C490.2 520.4 492.5 536.8 496.0 547.0 C499.5 557.2 502.0 562.2 508.0 569.0 C514.0 575.8 520.3 581.8 532.0 588.0 C543.7 594.2 554.0 600.2 578.0 606.0 C602.0 611.8 643.3 618.8 676.0 622.8 C708.7 626.8 741.7 628.5 774.0 629.7 C806.3 630.9 834.4 630.2 870.0 630.1 C905.6 630.0 954.8 630.4 987.5 629.1 C1020.2 627.8 1039.9 626.0 1066.0 622.3 C1092.1 618.5 1121.2 613.8 1144.0 606.6 C1166.8 599.4 1188.9 588.7 1203.0 579.2 C1217.1 569.7 1221.5 563.0 1228.5 549.8 C1235.5 536.6 1240.4 520.8 1245.0 500.0 C1249.6 479.2 1254.2 437.5 1256.0 425.0" fill="none" stroke="#fff" stroke-width="1.2"/><path d="M1259.7 437.7 L1256.0 425.0 L1248.8 436.1" fill="none" stroke="#fff" stroke-width="1.3"/><path d="M607.3 538.6 C610.8 544.7 621.7 566.6 628.0 575.0 C634.3 583.4 636.3 584.7 645.0 589.0 C653.7 593.3 665.0 597.5 680.0 601.0 C695.0 604.5 712.5 607.6 734.7 610.1 C756.9 612.6 790.5 614.9 813.0 616.0 C835.5 617.1 840.9 616.9 870.0 617.0 C899.1 617.1 954.9 617.3 987.5 616.4 C1020.1 615.5 1043.0 614.4 1065.9 611.5 C1088.8 608.6 1105.1 604.2 1124.7 598.8 C1144.3 593.4 1167.1 587.4 1183.4 579.2 C1199.7 571.0 1213.2 561.3 1222.6 549.8 C1232.0 538.3 1235.0 530.8 1240.0 510.0 C1245.0 489.2 1250.4 439.2 1252.5 425.0" fill="none" stroke="#fff" stroke-width="1.2"/><path d="M1256.2 437.7 L1252.5 425.0 L1245.3 436.1" fill="none" stroke="#fff" stroke-width="1.3"/><path d="M1259.0 426.0 C1257.0 438.3 1251.8 480.7 1247.0 500.0 C1242.2 519.3 1235.7 530.8 1230.0 542.0 C1224.3 553.2 1223.8 559.4 1212.8 567.4 C1201.8 575.4 1178.5 584.6 1163.8 590.0 C1149.1 595.4 1141.0 597.4 1124.7 599.7 C1108.4 602.0 1088.8 604.8 1065.9 603.7 C1043.0 602.6 1009.3 598.9 987.5 592.9 C965.7 586.9 949.1 577.6 935.0 568.0 C920.9 558.4 912.2 550.0 903.0 535.0 C893.8 520.0 886.0 496.3 880.0 478.0 C874.0 459.7 869.2 433.8 867.0 425.0" fill="none" stroke="#fff" stroke-width="1.2"/><path d="M875.2 435.3 L867.0 425.0 L864.5 438.0" fill="none" stroke="#fff" stroke-width="1.3"/><path d="M623.1 473.3 L672.0 446.7" fill="none" stroke="#fff" stroke-width="1.2"/><path d="M664.1 457.3 L672.0 446.7 L658.8 447.6" fill="none" stroke="#fff" stroke-width="1.3"/><path d="M630.3 499.8 C641.9 499.9 681.2 500.4 700.0 500.5 C718.8 500.6 727.9 502.2 743.2 500.6 C758.5 499.0 778.2 499.0 791.7 490.9 C805.2 482.8 815.9 463.3 824.0 452.0 C832.1 440.7 837.5 427.8 840.2 423.0" fill="none" stroke="#fff" stroke-width="1.2"/><path d="M839.1 436.2 L840.2 423.0 L829.5 430.8" fill="none" stroke="#fff" stroke-width="1.3"/><path d="M779.4 420.7 C782.5 420.6 791.1 421.8 798.0 419.8 C804.9 417.8 817.0 410.4 820.8 408.5" fill="none" stroke="#fff" stroke-width="1.2"/><path d="M812.5 418.8 L820.8 408.5 L807.6 408.9" fill="none" stroke="#fff" stroke-width="1.3"/><path d="M880.6 353.5 C883.7 349.1 891.4 333.2 899.4 327.0 C907.4 320.8 914.1 319.5 928.8 316.5 C943.5 313.5 967.9 310.4 987.5 308.8 C1007.1 307.2 1019.6 306.7 1046.3 307.0 C1073.0 307.3 1121.8 308.4 1147.7 310.7 C1173.6 313.0 1188.7 316.6 1201.6 320.6 C1214.5 324.7 1218.4 329.9 1225.0 335.0 C1231.6 340.1 1238.3 348.3 1241.0 351.0" fill="none" stroke="#fff" stroke-width="1.2"/><path d="M1228.6 346.4 L1241.0 351.0 L1236.4 338.6" fill="none" stroke="#fff" stroke-width="1.3"/><path d="M885.3 358.2 C888.6 355.4 896.1 345.4 905.3 341.1 C914.5 336.8 926.8 334.2 940.5 332.3 C954.2 330.4 971.8 329.7 987.5 329.4 C1003.2 329.1 1019.8 329.4 1034.5 330.6 C1049.2 331.8 1064.2 333.5 1075.7 336.4 C1087.2 339.3 1098.7 346.2 1103.3 348.2" fill="none" stroke="#fff" stroke-width="1.2"/><path d="M1090.1 348.5 L1103.3 348.2 L1094.4 338.4" fill="none" stroke="#fff" stroke-width="1.3"/><path d="M1102.1 361.7 C1092.8 361.3 1069.3 359.8 1046.3 359.4 C1023.3 359.0 985.5 358.9 964.0 359.4 C942.5 359.9 928.8 360.6 917.0 362.3 C905.2 364.0 897.4 368.1 893.5 369.3" fill="none" stroke="#fff" stroke-width="1.2"/><path d="M903.4 360.6 L893.5 369.3 L906.6 371.1" fill="none" stroke="#fff" stroke-width="1.3"/><path d="M1034.5 404.6 C1038.4 401.7 1050.2 391.7 1058.0 387.0 C1065.8 382.3 1074.3 378.9 1081.6 376.4 C1088.8 373.8 1098.2 372.5 1101.5 371.7" fill="none" stroke="#fff" stroke-width="1.2"/><path d="M1091.1 379.8 L1101.5 371.7 L1088.6 369.1" fill="none" stroke="#fff" stroke-width="1.3"/><path d="M1172.9 365.0 C1177.7 365.2 1192.0 364.9 1201.6 366.3 C1211.2 367.7 1225.5 372.3 1230.3 373.5" fill="none" stroke="#fff" stroke-width="1.2"/><path d="M1217.3 375.9 L1230.3 373.5 L1220.0 365.2" fill="none" stroke="#fff" stroke-width="1.3"/><path d="M1306.0 386.6 L1344.0 386.6" fill="none" stroke="#fff" stroke-width="1.2"/><path d="M1332.0 392.1 L1344.0 386.6 L1332.0 381.1" fill="none" stroke="#fff" stroke-width="1.3"/><path d="M887.6 411.4 C891.0 413.9 902.7 423.1 908.2 426.7 C913.7 430.3 916.3 431.6 920.8 433.0 C925.3 434.4 932.8 434.5 935.2 434.8" fill="none" stroke="#fff" stroke-width="1.2"/><path d="M922.6 438.8 L935.2 434.8 L924.0 427.9" fill="none" stroke="#fff" stroke-width="1.3"/><path d="M937.9 441.0 C933.5 440.1 918.2 438.1 911.8 435.7 C905.4 433.3 903.6 430.0 899.3 426.7 C895.0 423.4 888.0 417.7 885.8 415.9" fill="none" stroke="#fff" stroke-width="1.2"/><path d="M898.6 419.1 L885.8 415.9 L891.7 427.7" fill="none" stroke="#fff" stroke-width="1.3"/><path d="M1046.2 428.6 C1049.5 427.8 1047.8 425.1 1066.0 424.0 C1084.2 422.9 1133.3 423.2 1155.7 422.3 C1178.1 421.4 1189.8 420.2 1200.6 418.7 C1211.4 417.2 1214.6 414.9 1220.3 413.3 C1226.0 411.7 1232.3 409.6 1234.7 408.9" fill="none" stroke="#fff" stroke-width="1.2"/><path d="M1224.8 417.7 L1234.7 408.9 L1221.6 407.1" fill="none" stroke="#fff" stroke-width="1.3"/><path d="M1046.2 445.3 C1058.5 445.6 1097.1 447.7 1119.8 447.1 C1142.5 446.6 1166.7 444.6 1182.6 442.0 C1198.5 439.4 1205.7 435.6 1215.0 431.3 C1224.3 427.0 1234.4 418.6 1238.3 416.0" fill="none" stroke="#fff" stroke-width="1.2"/><path d="M1231.3 427.2 L1238.3 416.0 L1225.3 418.0" fill="none" stroke="#fff" stroke-width="1.3"/><path d="M1037.8 468.7 L1092.0 501.3" fill="none" stroke="#fff" stroke-width="1.2"/><path d="M1078.9 499.8 L1092.0 501.3 L1084.6 490.4" fill="none" stroke="#fff" stroke-width="1.3"/><path d="M1066.0 519.3 L1031.0 483.4" fill="none" stroke="#fff" stroke-width="1.2"/><path d="M1043.3 488.2 L1031.0 483.4 L1035.4 495.8" fill="none" stroke="#fff" stroke-width="1.3"/><path d="M871.4 424.0 C873.6 430.1 879.7 448.7 884.9 460.8 C890.1 472.9 895.3 486.2 902.8 496.7 C910.3 507.2 917.8 517.4 929.8 523.7 C941.8 530.0 956.8 532.3 974.7 534.4 C992.7 536.5 1019.0 536.2 1037.5 536.2 C1056.0 536.2 1077.9 534.7 1086.0 534.4" fill="none" stroke="#fff" stroke-width="1.2"/><path d="M1074.2 540.3 L1086.0 534.4 L1073.8 529.3" fill="none" stroke="#fff" stroke-width="1.3"/><path d="M1087.5 543.5 C1082.2 544.2 1072.8 547.2 1055.5 547.9 C1038.2 548.6 1003.2 549.2 983.7 547.9 C964.2 546.5 951.4 546.2 938.8 539.8 C926.2 533.4 917.2 521.6 908.2 509.3 C899.2 497.0 891.2 480.6 884.9 466.2 C878.6 451.8 872.9 430.3 870.5 423.1" fill="none" stroke="#fff" stroke-width="1.2"/><path d="M879.5 432.7 L870.5 423.1 L869.1 436.2" fill="none" stroke="#fff" stroke-width="1.3"/><path d="M1189.0 529.2 C1190.9 529.1 1195.7 533.5 1200.6 528.3 C1205.5 523.0 1211.0 513.3 1218.5 497.7 C1226.0 482.1 1239.8 447.2 1245.5 434.9 C1251.2 422.6 1251.5 425.8 1252.7 424.0" fill="none" stroke="#fff" stroke-width="1.2"/><path d="M1250.7 437.0 L1252.7 424.0 L1241.5 431.0" fill="none" stroke="#fff" stroke-width="1.3"/><path d="M878.2 353.2 C882.1 347.6 892.0 327.7 901.5 319.3 C911.0 310.9 921.4 306.8 935.4 303.0 C949.4 299.2 968.9 298.1 985.7 296.7 C1002.5 295.3 1016.2 295.1 1036.0 294.8 C1055.8 294.5 1083.0 294.1 1104.6 295.0 C1126.2 295.9 1148.0 297.4 1165.7 299.9 C1183.4 302.4 1199.8 305.4 1210.6 309.8 C1221.4 314.2 1224.5 319.0 1230.3 326.0 C1236.1 333.0 1243.0 347.7 1245.6 352.0" fill="none" stroke="#ff9a00" stroke-width="3.2"/><path d="M1234.8 344.4 L1245.6 352.0 L1244.3 338.9" fill="none" stroke="#ff9a00" stroke-width="3"/><path d="M841 348.6 C833 325 818 290 813.5 268 C810 250 816 243.3 830 243.3 L886 243.3 C900 243.3 906 252 902.5 270 C897 290 882 322 872.6 345.7" fill="none" stroke="#fff" stroke-width="1.2"/><path d="M872.0 332.5 L872.6 345.7 L882.2 336.6" fill="none" stroke="#fff" stroke-width="1.3"/><path d="M1251 350.2 C1243 328 1228 297 1222.5 278 C1219 264 1222 256.8 1235 256.8 L1302 256.8 C1314 256.8 1318 264 1313.5 279 C1307 298 1293 327 1284.2 349.3" fill="none" stroke="#fff" stroke-width="1.2"/><path d="M1283.7 336.1 L1284.2 349.3 L1293.8 340.3" fill="none" stroke="#fff" stroke-width="1.3"/><text x="858.4" y="235" text-anchor="middle" font-family="Liberation Sans" font-size="13" fill="#fff">ev_reassign</text><text x="1267" y="248.6" text-anchor="middle" font-family="Liberation Sans" font-size="13" fill="#fff">ev_autoresolve</text><text x="1062.2" y="285.4" text-anchor="middle" font-family="Liberation Sans" font-size="13" fill="#ff9a00">ev_resolve</text><text x="1061.8" y="297.6" text-anchor="middle" font-family="Liberation Sans" font-size="13" fill="#fff">ev_autoresolve</text><text x="992.2" y="321.2" text-anchor="middle" font-family="Liberation Sans" font-size="13" fill="#fff">ev_pending</text><text x="995.8" y="350" text-anchor="middle" font-family="Liberation Sans" font-size="13" fill="#fff">ev_assign</text><text x="1031.6" y="372.9" text-anchor="start" font-family="Liberation Sans" font-size="13" fill="#fff">ev_pending</text><text x="642.2" y="334.3" text-anchor="middle" font-family="Liberation Sans" font-size="13" fill="#fff">ev_assign</text><text x="582.7" y="405.3" text-anchor="middle" font-family="Liberation Sans" font-size="13" fill="#fff">ev_timeout</text><text x="1161" y="357.4" text-anchor="start" font-family="Liberation Sans" font-size="13" fill="#fff">ev_autoresolve</text><text x="1301" y="404.8" text-anchor="start" font-family="Liberation Sans" font-size="13" fill="#fff">ev_close</text><text x="770" y="435.3" text-anchor="start" font-family="Liberation Sans" font-size="13" fill="#fff">ev_assign</text><text x="878.6" y="443.7" text-anchor="start" font-family="Liberation Sans" font-size="13" fill="#fff">ev_timeout</text><text x="872.3" y="452.7" text-anchor="start" font-family="Liberation Sans" font-size="13" fill="#fff">ev_reassign</text><text x="616.4" y="448.1" text-anchor="start" font-family="Liberation Sans" font-size="13" fill="#fff">ev_timeout</text><text x="1141.3" y="441.2" text-anchor="middle" font-family="Liberation Sans" font-size="13" fill="#fff">ev_resolve</text><text x="1148.5" y="464" text-anchor="middle" font-family="Liberation Sans" font-size="13" fill="#fff">ev_autoresolve</text><text x="1033" y="477.1" text-anchor="start" font-family="Liberation Sans" font-size="13" fill="#fff">ev_dispatch</text><text x="1227.5" y="499.9" text-anchor="middle" font-family="Liberation Sans" font-size="13" fill="#fff">ev_autoresolve</text><text x="476.6" y="504.9" text-anchor="start" font-family="Liberation Sans" font-size="13" fill="#fff">ev_dispatch</text><text x="752.9" y="516" text-anchor="middle" font-family="Liberation Sans" font-size="13" fill="#fff">ev_assign</text><text x="1022.3" y="525.4" text-anchor="start" font-family="Liberation Sans" font-size="13" fill="#fff">ev_timeout</text><text x="947.7" y="545.2" text-anchor="middle" font-family="Liberation Sans" font-size="13" fill="#fff">ev_dispatch</text><text x="944.1" y="556.9" text-anchor="middle" font-family="Liberation Sans" font-size="13" fill="#fff">ev_assign</text><text x="1062" y="620.7" text-anchor="middle" font-family="Liberation Sans" font-size="13" fill="#fff">ev_reopen</text><text x="970.9" y="633.6" text-anchor="middle" font-family="Liberation Sans" font-size="13" fill="#fff">ev_autoresolve</text><text x="882.7" y="647.3" text-anchor="middle" font-family="Liberation Sans" font-size="13" fill="#fff">ev_autoresolve</text><rect x="906.5" y="284" width="10" height="10" fill="#ff9a00" stroke="#222" stroke-width="1"/><rect x="1199" y="283.7" width="10" height="10" fill="#ff9a00" stroke="#222" stroke-width="1"/><circle cx="467.8" cy="439.8" r="32" fill="#fff" stroke="#111" stroke-width="1.4"/><text x="467.8" y="444.1" text-anchor="middle" font-family="Liberation Sans" font-size="13" fill="#000">new</text><circle cx="584.8" cy="499" r="45" fill="#fff" stroke="#111" stroke-width="1.4"/><text x="584.8" y="503.3" text-anchor="middle" font-family="Liberation Sans" font-size="13" fill="#000">dispatched</text><circle cx="724.5" cy="420.7" r="55" fill="#fff" stroke="#111" stroke-width="1.4"/><text x="724.5" y="425.0" text-anchor="middle" font-family="Liberation Sans" font-size="13" fill="#000">escalated_tto</text><circle cx="855.7" cy="386.5" r="39" fill="#fff" stroke="#111" stroke-width="1.4"/><text x="855.7" y="390.8" text-anchor="middle" font-family="Liberation Sans" font-size="13" fill="#000">assigned</text><circle cx="990.7" cy="440.3" r="55" fill="#fff" stroke="#111" stroke-width="1.4"/><text x="990.7" y="444.6" text-anchor="middle" font-family="Liberation Sans" font-size="13" fill="#000">escalated_ttr</text><circle cx="1137.3" cy="365.2" r="35.5" fill="#fff" stroke="#111" stroke-width="1.4"/><text x="1137.3" y="369.5" text-anchor="middle" font-family="Liberation Sans" font-size="13" fill="#000">pending</text><circle cx="1267.4" cy="386.6" r="39" fill="#fff" stroke="#111" stroke-width="1.4"/><text x="1267.4" y="390.90000000000003" text-anchor="middle" font-family="Liberation Sans" font-size="13" fill="#000">resolved</text><circle cx="1378" cy="386.5" r="32.3" fill="#fff" stroke="#111" stroke-width="1.4"/><text x="1378" y="390.8" text-anchor="middle" font-family="Liberation Sans" font-size="13" fill="#000">closed</text><circle cx="1137.3" cy="529" r="51.6" fill="#fff" stroke="#111" stroke-width="1.4"/><text x="1137.3" y="533.3" text-anchor="middle" font-family="Liberation Sans" font-size="13" fill="#000">redispatched</text></svg>
<div style="position:absolute;left:289px;top:162px;width:1316px;height:657px;box-shadow:inset 4px 4px 9px rgba(0,0,0,.6), inset -1px -1px 4px rgba(0,0,0,.3);pointer-events:none"></div>
<div style="position:absolute;left:1565px;top:172.5px;width:29px;height:25px;background:#555;border:1px solid #7a6550;box-sizing:border-box"></div>
<svg style="position:absolute;left:1565px;top:172px;" width="29" height="26" viewBox="1565 172 29 26"><rect x="1571" y="175.0" width="3" height="4" fill="#fff"/><rect x="1576.3" y="175.0" width="13.2" height="4" fill="#fff"/><rect x="1571" y="180.6" width="3" height="4" fill="#fff"/><rect x="1576.3" y="180.6" width="13.2" height="4" fill="#fff"/><rect x="1571" y="186.2" width="3" height="4" fill="#fff"/><rect x="1576.3" y="186.2" width="13.2" height="4" fill="#fff"/></svg>
<div style="position:absolute;left:1617px;top:187px;width:419px;height:677px;border:1px solid #565656;border-right-color:#474747;border-bottom-color:#474747;box-sizing:border-box"></div>
<div style="position:absolute;left:1627px;top:172px;width:142px;height:32px;background:#555"></div>
<div style="position:absolute;left:1298.00px;top:182.60px;width:800px;text-align:center;font:bold 13px/13px 'Liberation Sans', sans-serif;color:#fff;white-space:nowrap;letter-spacing:-0.15px">Transition properties</div>
<div style="position:absolute;left:1632.00px;top:220.70px;font:bold 13px/13px 'Liberation Sans', sans-serif;color:#fff;white-space:nowrap;">Origin State</div>
<div style="position:absolute;left:1714px;top:214.6px;width:97px;height:20.700000000000017px;background:#fff"></div>
<div style="position:absolute;left:1719.00px;top:219.54px;font:normal 12px/12px 'Liberation Sans', sans-serif;color:#111;white-space:nowrap;">assigned</div>
<svg style="position:absolute;left:1796px;top:214.6px;" width="10" height="20.700000000000017" viewBox="1796 214.6 10 20.700000000000017"><path d="M1796.8 222.95 L1805.2 222.95 L1801 227.45 Z" fill="#111"/></svg>
<div style="position:absolute;left:1632.00px;top:251.40px;font:bold 13px/13px 'Liberation Sans', sans-serif;color:#fff;white-space:nowrap;">Event</div>
<div style="position:absolute;left:1714px;top:248px;width:194px;height:20.30000000000001px;background:#fff"></div>
<div style="position:absolute;left:1719.00px;top:252.88px;font:normal 11.6px/11.6px 'Liberation Sans', sans-serif;color:#111;white-space:nowrap;">ev_resolve (StimulusUserAction)</div>
<svg style="position:absolute;left:1893px;top:248px;" width="10" height="20.30000000000001" viewBox="1893 248 10 20.30000000000001"><path d="M1893.8 256.15 L1902.2 256.15 L1898 260.65 Z" fill="#111"/></svg>
<div style="position:absolute;left:1632.00px;top:277.80px;font:bold 13px/13px 'Liberation Sans', sans-serif;color:#fff;white-space:nowrap;">Destination</div>
<div style="position:absolute;left:1632.00px;top:293.00px;font:bold 13px/13px 'Liberation Sans', sans-serif;color:#fff;white-space:nowrap;">State</div>
<div style="position:absolute;left:1714px;top:282.7px;width:106px;height:19.30000000000001px;background:#fff"></div>
<div style="position:absolute;left:1719.00px;top:287.74px;font:normal 12px/12px 'Liberation Sans', sans-serif;color:#111;white-space:nowrap;">resolved</div>
<svg style="position:absolute;left:1805px;top:282.7px;" width="10" height="19.30000000000001" viewBox="1805 282.7 10 19.30000000000001"><path d="M1805.8 290.35 L1814.2 290.35 L1810 294.85 Z" fill="#111"/></svg>
<div style="position:absolute;left:1629px;top:314px;width:396px;height:20px;background:#555"></div>
<div style="position:absolute;left:1427.00px;top:318.52px;width:800px;text-align:center;font:bold 11.2px/11.2px 'Liberation Sans', sans-serif;color:#fff;white-space:nowrap;">Actions on this Transition</div>
<div style="position:absolute;left:1629.00px;top:356.04px;font:normal 12px/12px 'Liberation Sans', sans-serif;color:#fff;white-space:nowrap;">Action #1</div>
<div style="position:absolute;left:1688px;top:353px;width:29px;height:21px;background:#555"></div>
<svg style="position:absolute;left:1697.5px;top:358.5px;" width="10" height="10" viewBox="1697.5 358.5 10 10"><path d="M1699.7 360.7 L1705.3 366.3 M1705.3 360.7 L1699.7 366.3" stroke="#ddd" stroke-width="1.8"/></svg>
<div style="position:absolute;left:1632.00px;top:383.50px;font:bold 13px/13px 'Liberation Sans', sans-serif;color:#fff;white-space:nowrap;">Operation</div>
<div style="position:absolute;left:1714px;top:379px;width:136px;height:19.5px;background:#fff"></div>
<div style="position:absolute;left:1719.00px;top:382.74px;font:normal 12px/12px 'Liberation Sans', sans-serif;color:#111;white-space:nowrap;">SetCurrentDate</div>
<svg style="position:absolute;left:1835px;top:379px;" width="10" height="19.5" viewBox="1835 379 10 19.5"><path d="M1835.8 386.75 L1844.2 386.75 L1840 391.25 Z" fill="#111"/></svg>
<div style="position:absolute;left:1714.00px;top:414.73px;font:normal 11.9px/11.9px 'Liberation Sans', sans-serif;color:#fff;white-space:nowrap;">Set a field with the current date and time</div>
<div style="position:absolute;left:1632.00px;top:438.60px;font:bold 13px/13px 'Liberation Sans', sans-serif;color:#fff;white-space:nowrap;">Target Field</div>
<div style="position:absolute;left:1714px;top:436.4px;width:122.5px;height:19.600000000000023px;background:#fff"></div>
<div style="position:absolute;left:1719.00px;top:440.24px;font:normal 12px/12px 'Liberation Sans', sans-serif;color:#111;white-space:nowrap;">resolution_date</div>
<svg style="position:absolute;left:1821.5px;top:436.4px;" width="10" height="19.600000000000023" viewBox="1821.5 436.4 10 19.600000000000023"><path d="M1822.3 444.2 L1830.7 444.2 L1826.5 448.7 Z" fill="#111"/></svg>
<div style="position:absolute;left:1629px;top:467.5px;width:396px;height:1.5px;background:#aaa"></div>
<div style="position:absolute;left:1629.00px;top:479.54px;font:normal 12px/12px 'Liberation Sans', sans-serif;color:#fff;white-space:nowrap;">Action #2</div>
<div style="position:absolute;left:1688px;top:476.5px;width:29px;height:20.5px;background:#555"></div>
<svg style="position:absolute;left:1697.5px;top:481.75px;" width="10" height="10" viewBox="1697.5 481.75 10 10"><path d="M1699.7 483.95 L1705.3 489.55 M1705.3 483.95 L1699.7 489.55" stroke="#ddd" stroke-width="1.8"/></svg>
<div style="position:absolute;left:1632.00px;top:507.20px;font:bold 13px/13px 'Liberation Sans', sans-serif;color:#fff;white-space:nowrap;">Operation</div>
<div style="position:absolute;left:1714px;top:502.3px;width:136px;height:19.69999999999999px;background:#fff"></div>
<div style="position:absolute;left:1719.00px;top:506.24px;font:normal 12px/12px 'Liberation Sans', sans-serif;color:#111;white-space:nowrap;">SetElapsedTime</div>
<svg style="position:absolute;left:1835px;top:502.3px;" width="10" height="19.69999999999999" viewBox="1835 502.3 10 19.69999999999999"><path d="M1835.8 510.15 L1844.2 510.15 L1840 514.65 Z" fill="#111"/></svg>
<div style="position:absolute;left:1714.00px;top:537.83px;font:normal 11.9px/11.9px 'Liberation Sans', sans-serif;color:#fff;white-space:nowrap;">Set a field with the time (seconds) elapsed since a</div>
<div style="position:absolute;left:1714.00px;top:553.33px;font:normal 11.9px/11.9px 'Liberation Sans', sans-serif;color:#fff;white-space:nowrap;">date given by another field</div>
<div style="position:absolute;left:1632.00px;top:578.30px;font:bold 13px/13px 'Liberation Sans', sans-serif;color:#fff;white-space:nowrap;">Target Field</div>
<div style="position:absolute;left:1714px;top:575px;width:105.70000000000005px;height:20.299999999999955px;background:#fff"></div>
<div style="position:absolute;left:1719.00px;top:579.54px;font:normal 12px/12px 'Liberation Sans', sans-serif;color:#111;white-space:nowrap;">time_spent</div>
<svg style="position:absolute;left:1804.7px;top:575px;" width="10" height="20.299999999999955" viewBox="1804.7 575 10 20.299999999999955"><path d="M1805.5 583.15 L1813.9 583.15 L1809.7 587.65 Z" fill="#111"/></svg>
<div style="position:absolute;left:1632.00px;top:603.40px;font:bold 13px/13px 'Liberation Sans', sans-serif;color:#fff;white-space:nowrap;">Reference</div>
<div style="position:absolute;left:1632.00px;top:619.60px;font:bold 13px/13px 'Liberation Sans', sans-serif;color:#fff;white-space:nowrap;">Field</div>
<div style="position:absolute;left:1714px;top:609.3px;width:122px;height:20.100000000000023px;background:#fff"></div>
<div style="position:absolute;left:1719.00px;top:613.64px;font:normal 12px/12px 'Liberation Sans', sans-serif;color:#111;white-space:nowrap;">start_date</div>
<svg style="position:absolute;left:1821px;top:609.3px;" width="10" height="20.100000000000023" viewBox="1821 609.3 10 20.100000000000023"><path d="M1821.8 617.3499999999999 L1830.2 617.3499999999999 L1826 621.8499999999999 Z" fill="#111"/></svg>
<div style="position:absolute;left:1632.00px;top:643.60px;font:bold 13px/13px 'Liberation Sans', sans-serif;color:#fff;white-space:nowrap;">Working</div>
<div style="position:absolute;left:1632.00px;top:659.80px;font:bold 13px/13px 'Liberation Sans', sans-serif;color:#fff;white-space:nowrap;">Hours</div>
<div style="position:absolute;left:1714px;top:648.8px;width:258px;height:21.2px;background:#fff"></div>
<div style="position:absolute;left:1717.00px;top:654.44px;font:normal 12px/12px 'Liberation Sans', sans-serif;color:#111;white-space:nowrap;">DefaultWorkingTimeComputer</div>
<div style="position:absolute;left:1629px;top:686.3px;width:396px;height:1.5px;background:#aaa"></div>
<div style="position:absolute;left:1629.00px;top:699.34px;font:normal 12px/12px 'Liberation Sans', sans-serif;color:#fff;white-space:nowrap;">Action #3</div>
<div style="position:absolute;left:1688px;top:696px;width:29px;height:20.299999999999955px;background:#555"></div>
<svg style="position:absolute;left:1697.5px;top:701.15px;" width="10" height="10" viewBox="1697.5 701.15 10 10"><path d="M1699.7 703.35 L1705.3 708.9499999999999 M1705.3 703.35 L1699.7 708.9499999999999" stroke="#ddd" stroke-width="1.8"/></svg>
<div style="position:absolute;left:1632.00px;top:726.20px;font:bold 13px/13px 'Liberation Sans', sans-serif;color:#fff;white-space:nowrap;">Operation</div>
<div style="position:absolute;left:1714px;top:721.3px;width:136px;height:19.700000000000045px;background:#fff"></div>
<div style="position:absolute;left:1719.00px;top:725.24px;font:normal 12px/12px 'Liberation Sans', sans-serif;color:#111;white-space:nowrap;">ResolveChildTickets</div>
<svg style="position:absolute;left:1835px;top:721.3px;" width="10" height="19.700000000000045" viewBox="1835 721.3 10 19.700000000000045"><path d="M1835.8 729.15 L1844.2 729.15 L1840 733.65 Z" fill="#111"/></svg>
<div style="position:absolute;left:1714.00px;top:757.73px;font:normal 11.9px/11.9px 'Liberation Sans', sans-serif;color:#fff;white-space:nowrap;">Cascade the resolution to child ticket</div>
<div style="position:absolute;left:1714.00px;top:773.78px;font:normal 11.9px/11.9px 'Liberation Sans', sans-serif;color:#fff;white-space:nowrap;">(ev_autoresolve), and align the following</div>
<div style="position:absolute;left:1714.00px;top:789.83px;font:normal 11.9px/11.9px 'Liberation Sans', sans-serif;color:#fff;white-space:nowrap;">characteristics: service, team, agent, resolution</div>
<div style="position:absolute;left:1714.00px;top:805.88px;font:normal 11.9px/11.9px 'Liberation Sans', sans-serif;color:#fff;white-space:nowrap;">info</div>
<div style="position:absolute;left:1629px;top:823.7px;width:113px;height:27px;background:#555;border:1px solid #646464;box-sizing:border-box"></div>
<div style="position:absolute;left:1285.50px;top:832.24px;width:800px;text-align:center;font:bold 12px/12px 'Liberation Sans', sans-serif;color:#fff;white-space:nowrap;">Add an action...</div>
<div style="position:absolute;left:1617px;top:890px;width:419px;height:190px;border:1px solid #565656;border-right-color:#474747;border-bottom-color:#474747;box-sizing:border-box"></div>
<div style="position:absolute;left:1627px;top:875.3px;width:146px;height:31.4px;background:#555"></div>
<div style="position:absolute;left:1300.00px;top:884.80px;width:800px;text-align:center;font:bold 13px/13px 'Liberation Sans', sans-serif;color:#fff;white-space:nowrap;letter-spacing:-0.25px">Behavior of the Fields</div>
<div style="position:absolute;left:1627.00px;top:917.80px;font:normal 13px/13px 'Liberation Sans', sans-serif;color:#fff;white-space:nowrap;">Hide unmodified values</div>
<div style="position:absolute;left:1909px;top:912px;width:53px;height:26px;background:#0079a6"></div>
<div style="position:absolute;left:1962px;top:912px;width:62.4px;height:26px;background:#555"></div>
<div style="position:absolute;left:1535.50px;top:919.00px;width:800px;text-align:center;font:bold 13px/13px 'Liberation Sans', sans-serif;color:#fff;white-space:nowrap;">Hide</div>
<div style="position:absolute;left:1593.00px;top:919.00px;width:800px;text-align:center;font:bold 13px/13px 'Liberation Sans', sans-serif;color:#fff;white-space:nowrap;">Show</div>
<div style="position:absolute;left:1627.00px;top:946.81px;font:bold 10.5px/10.5px 'Liberation Sans', sans-serif;color:#fff;white-space:nowrap;">Field</div>
<div style="position:absolute;left:1858.70px;top:946.81px;font:bold 10.5px/10.5px 'Liberation Sans', sans-serif;color:#fff;white-space:nowrap;">Behavior</div>
<div style="position:absolute;left:1629.20px;top:971.00px;font:bold 13px/13px 'Liberation Sans', sans-serif;color:#fff;white-space:nowrap;letter-spacing:-0.15px">resolution_code</div>
<div style="position:absolute;left:1784.2px;top:966.0px;width:85.5px;height:22.8px;border:1px solid #777;border-radius:3px;box-sizing:border-box"></div>
<svg style="position:absolute;left:1790px;top:967.8px;" width="18" height="20" viewBox="1790 967.8 18 20"><path d="M1798.5 970.8 L1804.5 981.8 L1792.5 981.8 Z" fill="#aaa"/><rect x="1797.8" y="974.3" width="1.4" height="4" fill="#333"/><rect x="1797.8" y="979.0999999999999" width="1.4" height="1.4" fill="#333"/></svg>
<div style="position:absolute;left:1808.60px;top:972.10px;font:normal 11.7px/11.7px 'Liberation Sans', sans-serif;color:#888;white-space:nowrap;">Mandatory</div>
<div style="position:absolute;left:1881px;top:966.0px;width:96.7px;height:22.8px;border:1px solid #777;border-radius:3px;box-sizing:border-box"></div>
<svg style="position:absolute;left:1888px;top:967.8px;" width="16" height="20" viewBox="1888 967.8 16 20"><rect x="1891" y="973.3" width="9" height="6.5" rx="1.5" fill="none" stroke="#999" stroke-width="1.6"/><path d="M1893 979.8 L1893 982.8 L1896 979.8" fill="#999"/></svg>
<div style="position:absolute;left:1905.40px;top:972.10px;font:normal 11.7px/11.7px 'Liberation Sans', sans-serif;color:#888;white-space:nowrap;">Must prompt</div>
<div style="position:absolute;left:1983.6px;top:967.8px;width:38px;height:19.8px;background:#555"></div>
<svg style="position:absolute;left:1990px;top:967.8px;" width="24" height="20" viewBox="1990 967.8 24 20"><path d="M1998 982.3 L2006.5 973.8 " stroke="#bbb" stroke-width="2.2"/><path d="M1997 983.3 L1998.2 980.5999999999999 L1999.6 982.0 Z" fill="#bbb"/></svg>
<div style="position:absolute;left:1629.20px;top:997.40px;font:bold 13px/13px 'Liberation Sans', sans-serif;color:#fff;white-space:nowrap;letter-spacing:-0.15px">servicesubcategory_id</div>
<div style="position:absolute;left:1785px;top:993.25px;width:84px;height:22.5px;background:#c8efc8;border-radius:3px"></div>
<svg style="position:absolute;left:1790px;top:994.25px;" width="18" height="20" viewBox="1790 994.25 18 20"><path d="M1798.5 997.25 L1804.5 1008.25 L1792.5 1008.25 Z" fill="#222"/><rect x="1797.8" y="1000.75" width="1.4" height="4" fill="#c8efc8"/><rect x="1797.8" y="1005.55" width="1.4" height="1.4" fill="#c8efc8"/></svg>
<div style="position:absolute;left:1808.60px;top:998.50px;font:normal 11.7px/11.7px 'Liberation Sans', sans-serif;color:#666;white-space:nowrap;">Mandatory</div>
<div style="position:absolute;left:1881px;top:992.45px;width:96.7px;height:22.8px;border:1px solid #777;border-radius:3px;box-sizing:border-box"></div>
<svg style="position:absolute;left:1888px;top:994.25px;" width="16" height="20" viewBox="1888 994.25 16 20"><rect x="1891" y="999.75" width="9" height="6.5" rx="1.5" fill="none" stroke="#999" stroke-width="1.6"/><path d="M1893 1006.25 L1893 1009.25 L1896 1006.25" fill="#999"/></svg>
<div style="position:absolute;left:1905.40px;top:998.50px;font:normal 11.7px/11.7px 'Liberation Sans', sans-serif;color:#888;white-space:nowrap;">Must prompt</div>
<div style="position:absolute;left:1983.6px;top:994.25px;width:38px;height:19.8px;background:#555"></div>
<svg style="position:absolute;left:1990px;top:994.25px;" width="24" height="20" viewBox="1990 994.25 24 20"><path d="M1998 1008.75 L2006.5 1000.25 " stroke="#bbb" stroke-width="2.2"/><path d="M1997 1009.75 L1998.2 1007.05 L1999.6 1008.45 Z" fill="#bbb"/></svg>
<div style="position:absolute;left:1629.20px;top:1023.80px;font:bold 13px/13px 'Liberation Sans', sans-serif;color:#fff;white-space:nowrap;letter-spacing:-0.15px">service_id</div>
<div style="position:absolute;left:1784.2px;top:1018.9000000000001px;width:85.5px;height:22.8px;border:1px solid #777;border-radius:3px;box-sizing:border-box"></div>
<svg style="position:absolute;left:1790px;top:1020.7px;" width="18" height="20" viewBox="1790 1020.7 18 20"><path d="M1798.5 1023.7 L1804.5 1034.7 L1792.5 1034.7 Z" fill="#aaa"/><rect x="1797.8" y="1027.2" width="1.4" height="4" fill="#333"/><rect x="1797.8" y="1032.0" width="1.4" height="1.4" fill="#333"/></svg>
<div style="position:absolute;left:1808.60px;top:1024.90px;font:normal 11.7px/11.7px 'Liberation Sans', sans-serif;color:#888;white-space:nowrap;">Mandatory</div>
<div style="position:absolute;left:1881px;top:1018.9000000000001px;width:96.7px;height:22.8px;border:1px solid #777;border-radius:3px;box-sizing:border-box"></div>
<svg style="position:absolute;left:1888px;top:1020.7px;" width="16" height="20" viewBox="1888 1020.7 16 20"><rect x="1891" y="1026.2" width="9" height="6.5" rx="1.5" fill="none" stroke="#999" stroke-width="1.6"/><path d="M1893 1032.7 L1893 1035.7 L1896 1032.7" fill="#999"/></svg>
<div style="position:absolute;left:1905.40px;top:1024.90px;font:normal 11.7px/11.7px 'Liberation Sans', sans-serif;color:#888;white-space:nowrap;">Must prompt</div>
<div style="position:absolute;left:1983.6px;top:1020.7px;width:38px;height:19.8px;background:#555"></div>
<svg style="position:absolute;left:1990px;top:1020.7px;" width="24" height="20" viewBox="1990 1020.7 24 20"><path d="M1998 1035.2 L2006.5 1026.7 " stroke="#bbb" stroke-width="2.2"/><path d="M1997 1036.2 L1998.2 1033.5 L1999.6 1034.9 Z" fill="#bbb"/></svg>
<div style="position:absolute;left:1629.20px;top:1050.20px;font:bold 13px/13px 'Liberation Sans', sans-serif;color:#fff;white-space:nowrap;letter-spacing:-0.15px">solution</div>
<div style="position:absolute;left:1784.2px;top:1045.35px;width:85.5px;height:22.8px;border:1px solid #777;border-radius:3px;box-sizing:border-box"></div>
<svg style="position:absolute;left:1790px;top:1047.1499999999999px;" width="18" height="20" viewBox="1790 1047.1499999999999 18 20"><path d="M1798.5 1050.1499999999999 L1804.5 1061.1499999999999 L1792.5 1061.1499999999999 Z" fill="#aaa"/><rect x="1797.8" y="1053.6499999999999" width="1.4" height="4" fill="#333"/><rect x="1797.8" y="1058.4499999999998" width="1.4" height="1.4" fill="#333"/></svg>
<div style="position:absolute;left:1808.60px;top:1051.30px;font:normal 11.7px/11.7px 'Liberation Sans', sans-serif;color:#888;white-space:nowrap;">Mandatory</div>
<div style="position:absolute;left:1881px;top:1045.35px;width:96.7px;height:22.8px;border:1px solid #777;border-radius:3px;box-sizing:border-box"></div>
<svg style="position:absolute;left:1888px;top:1047.1499999999999px;" width="16" height="20" viewBox="1888 1047.1499999999999 16 20"><rect x="1891" y="1052.6499999999999" width="9" height="6.5" rx="1.5" fill="none" stroke="#999" stroke-width="1.6"/><path d="M1893 1059.1499999999999 L1893 1062.1499999999999 L1896 1059.1499999999999" fill="#999"/></svg>
<div style="position:absolute;left:1905.40px;top:1051.30px;font:normal 11.7px/11.7px 'Liberation Sans', sans-serif;color:#888;white-space:nowrap;">Must prompt</div>
<div style="position:absolute;left:1983.6px;top:1047.1499999999999px;width:38px;height:19.8px;background:#555"></div>
<svg style="position:absolute;left:1990px;top:1047.1499999999999px;" width="24" height="20" viewBox="1990 1047.1499999999999 24 20"><path d="M1998 1061.6499999999999 L2006.5 1053.1499999999999 " stroke="#bbb" stroke-width="2.2"/><path d="M1997 1062.6499999999999 L1998.2 1059.9499999999998 L1999.6 1061.35 Z" fill="#bbb"/></svg>
<svg style="position:absolute;left:1605px;top:645px;" width="12" height="24" viewBox="1605 645 12 24"><path d="M1608 653.5 L1612 657 L1608 660.5 Z" fill="#888"/></svg>
<svg style="position:absolute;left:940px;top:819px;" width="16" height="8" viewBox="940 819 16 8"><path d="M943.5 822 L947 825.5 L950.5 822 Z" fill="#999"/></svg>
<div style="position:absolute;left:289.00px;top:834.90px;font:normal 13px/13px 'Liberation Sans', sans-serif;color:#fff;white-space:nowrap;">Stopwatches</div>
<svg style="position:absolute;left:368.5px;top:831.9px;" width="39.80000000000001" height="18" viewBox="368.5 831.9 39.80000000000001 18"><path d="M372.0 841.4 H381.0 M376.5 836.9 V845.9" stroke="#fff" stroke-width="3"/><path d="M396.3 837.4 L404.3 845.4 M404.3 837.4 L396.3 845.4" stroke="#888" stroke-width="2"/></svg>
<div style="position:absolute;left:723.00px;top:834.90px;font:normal 13px/13px 'Liberation Sans', sans-serif;color:#fff;white-space:nowrap;">Events</div>
<svg style="position:absolute;left:766.5px;top:831.9px;" width="39.799999999999955" height="18" viewBox="766.5 831.9 39.799999999999955 18"><path d="M770.0 841.4 H779.0 M774.5 836.9 V845.9" stroke="#fff" stroke-width="3"/><path d="M794.3 837.4 L802.3 845.4 M802.3 837.4 L794.3 845.4" stroke="#888" stroke-width="2"/></svg>
<div style="position:absolute;left:1158.00px;top:835.20px;font:normal 13px/13px 'Liberation Sans', sans-serif;color:#fff;white-space:nowrap;">Highlight Scale</div>
<svg style="position:absolute;left:1251.5px;top:832.2px;" width="38.799999999999955" height="18" viewBox="1251.5 832.2 38.799999999999955 18"><path d="M1255.0 841.7 H1264.0 M1259.5 837.2 V846.2" stroke="#fff" stroke-width="3"/><path d="M1278.3 837.7 L1286.3 845.7 M1286.3 837.7 L1278.3 845.7" stroke="#888" stroke-width="2"/></svg>
<div style="position:absolute;left:311.40px;top:865.10px;font:normal 13px/13px 'Liberation Sans', sans-serif;color:#fff;white-space:nowrap;">cumulatedpending</div>
<div style="position:absolute;left:311.40px;top:889.35px;font:normal 13px/13px 'Liberation Sans', sans-serif;color:#fff;white-space:nowrap;">tto</div>
<div style="position:absolute;left:311.40px;top:913.60px;font:normal 13px/13px 'Liberation Sans', sans-serif;color:#fff;white-space:nowrap;">ttr</div>
<svg style="position:absolute;left:290px;top:860px;" width="20" height="70" viewBox="290 860 20 70"><circle cx="299" cy="873.1999999999999" r="4.2" fill="none" stroke="#ddd" stroke-width="1.6"/><rect x="297.5" y="866.4" width="3" height="1.6" fill="#ddd"/><path d="M299 873.1999999999999 L300.8 871.4" stroke="#ddd" stroke-width="1.1"/><path d="M302.5 867.9 L304 866.6" stroke="#ddd" stroke-width="1.2"/><circle cx="299" cy="897.4499999999999" r="4.2" fill="none" stroke="#ddd" stroke-width="1.6"/><rect x="297.5" y="890.65" width="3" height="1.6" fill="#ddd"/><path d="M299 897.4499999999999 L300.8 895.65" stroke="#ddd" stroke-width="1.1"/><path d="M302.5 892.15 L304 890.85" stroke="#ddd" stroke-width="1.2"/><circle cx="299" cy="921.6999999999999" r="4.2" fill="none" stroke="#ddd" stroke-width="1.6"/><rect x="297.5" y="914.9" width="3" height="1.6" fill="#ddd"/><path d="M299 921.6999999999999 L300.8 919.9" stroke="#ddd" stroke-width="1.1"/><path d="M302.5 916.4 L304 915.1" stroke="#ddd" stroke-width="1.2"/></svg>
<div style="position:absolute;left:745.80px;top:865.10px;font:normal 13px/13px 'Liberation Sans', sans-serif;color:#fff;white-space:nowrap;">ev_assign</div>
<div style="position:absolute;left:745.80px;top:889.42px;font:normal 13px/13px 'Liberation Sans', sans-serif;color:#fff;white-space:nowrap;">ev_autoclose</div>
<div style="position:absolute;left:745.80px;top:913.74px;font:normal 13px/13px 'Liberation Sans', sans-serif;color:#fff;white-space:nowrap;">ev_autoresolve</div>
<div style="position:absolute;left:745.80px;top:938.06px;font:normal 13px/13px 'Liberation Sans', sans-serif;color:#fff;white-space:nowrap;">ev_close</div>
<div style="position:absolute;left:745.80px;top:962.38px;font:normal 13px/13px 'Liberation Sans', sans-serif;color:#fff;white-space:nowrap;">ev_dispatch</div>
<div style="position:absolute;left:745.80px;top:986.70px;font:normal 13px/13px 'Liberation Sans', sans-serif;color:#fff;white-space:nowrap;">ev_pending</div>
<div style="position:absolute;left:745.80px;top:1011.02px;font:normal 13px/13px 'Liberation Sans', sans-serif;color:#fff;white-space:nowrap;">ev_reassign</div>
<div style="position:absolute;left:745.80px;top:1035.34px;font:normal 13px/13px 'Liberation Sans', sans-serif;color:#fff;white-space:nowrap;">ev_reopen</div>
<div style="position:absolute;left:745.80px;top:1059.66px;font:normal 13px/13px 'Liberation Sans', sans-serif;color:#fff;white-space:nowrap;">ev_resolve</div>
<div style="position:absolute;left:745.80px;top:1083.98px;font:normal 13px/13px 'Liberation Sans', sans-serif;color:#fff;white-space:nowrap;">ev_timeout</div>
<svg style="position:absolute;left:724px;top:860px;" width="20" height="240" viewBox="724 860 20 240"><circle cx="734" cy="868.0" r="2.9" fill="#fff"/><path d="M728.4 879.3000000000001 Q728.2 872.3000000000001 731.4 871.7 L736.6 871.7 Q739.8 872.3000000000001 739.6 879.3000000000001 Z" fill="#fff"/><path d="M730.4 875.6 V879.4 M737.6 875.6 V879.4" stroke="#333" stroke-width="0.9"/><path d="M735.5 890.82 L739 890.82 L735.8 895.82 L738.6 895.82 L730 903.82 L733 897.82 L729.8 897.82 Z" fill="#fff"/><path d="M735.5 915.14 L739 915.14 L735.8 920.14 L738.6 920.14 L730 928.14 L733 922.14 L729.8 922.14 Z" fill="#fff"/><circle cx="734" cy="940.96" r="2.9" fill="#fff"/><path d="M728.4 952.2600000000001 Q728.2 945.2600000000001 731.4 944.6600000000001 L736.6 944.6600000000001 Q739.8 945.2600000000001 739.6 952.2600000000001 Z" fill="#fff"/><path d="M730.4 948.5600000000001 V952.36 M737.6 948.5600000000001 V952.36" stroke="#333" stroke-width="0.9"/><circle cx="734" cy="965.28" r="2.9" fill="#fff"/><path d="M728.4 976.58 Q728.2 969.58 731.4 968.98 L736.6 968.98 Q739.8 969.58 739.6 976.58 Z" fill="#fff"/><path d="M730.4 972.88 V976.68 M737.6 972.88 V976.68" stroke="#333" stroke-width="0.9"/><circle cx="734" cy="989.6" r="2.9" fill="#fff"/><path d="M728.4 1000.9000000000001 Q728.2 993.9000000000001 731.4 993.3000000000001 L736.6 993.3000000000001 Q739.8 993.9000000000001 739.6 1000.9000000000001 Z" fill="#fff"/><path d="M730.4 997.2 V1001.0 M737.6 997.2 V1001.0" stroke="#333" stroke-width="0.9"/><circle cx="734" cy="1013.92" r="2.9" fill="#fff"/><path d="M728.4 1025.22 Q728.2 1018.22 731.4 1017.62 L736.6 1017.62 Q739.8 1018.22 739.6 1025.22 Z" fill="#fff"/><path d="M730.4 1021.52 V1025.32 M737.6 1021.52 V1025.32" stroke="#333" stroke-width="0.9"/><circle cx="734" cy="1038.2400000000002" r="2.9" fill="#fff"/><path d="M728.4 1049.5400000000002 Q728.2 1042.5400000000002 731.4 1041.94 L736.6 1041.94 Q739.8 1042.5400000000002 739.6 1049.5400000000002 Z" fill="#fff"/><path d="M730.4 1045.8400000000001 V1049.64 M737.6 1045.8400000000001 V1049.64" stroke="#333" stroke-width="0.9"/><circle cx="734" cy="1062.5600000000002" r="2.9" fill="#fff"/><path d="M728.4 1073.8600000000001 Q728.2 1066.8600000000001 731.4 1066.26 L736.6 1066.26 Q739.8 1066.8600000000001 739.6 1073.8600000000001 Z" fill="#fff"/><path d="M730.4 1070.16 V1073.96 M737.6 1070.16 V1073.96" stroke="#333" stroke-width="0.9"/><path d="M735.5 1085.38 L739 1085.38 L735.8 1090.38 L738.6 1090.38 L730 1098.38 L733 1092.38 L729.8 1092.38 Z" fill="#fff"/></svg>
<div style="position:absolute;left:1190.00px;top:867.94px;font:normal 12px/12px 'Liberation Sans', sans-serif;color:#fff;white-space:nowrap;">warning</div>
<div style="position:absolute;left:1250.40px;top:867.94px;font:normal 12px/12px 'Liberation Sans', sans-serif;color:#fff;white-space:nowrap;">Orange</div>
<div style="position:absolute;left:1190.00px;top:896.94px;font:normal 12px/12px 'Liberation Sans', sans-serif;color:#fff;white-space:nowrap;">critical</div>
<div style="position:absolute;left:1250.40px;top:896.94px;font:normal 12px/12px 'Liberation Sans', sans-serif;color:#fff;white-space:nowrap;">Red</div>
<div style="position:absolute;left:1190.00px;top:925.64px;font:normal 12px/12px 'Liberation Sans', sans-serif;color:#fff;white-space:nowrap;">closed</div>
<div style="position:absolute;left:1250.40px;top:925.64px;font:normal 12px/12px 'Liberation Sans', sans-serif;color:#fff;white-space:nowrap;">None</div>
<svg style="position:absolute;left:1160px;top:862px;" width="26" height="84" viewBox="1160 862 26 84"><circle cx="1171.5" cy="875.4" r="7.2" fill="#d41c1c"/><circle cx="1171" cy="873.4" r="5" fill="#f03030" opacity=".5"/><path d="M1175.5 872.9 Q1175.5 866.4 1178.8 866.4 Q1182 866.4 1182 872.9 L1183.5 874.9 L1174 874.9 Z" fill="#f0b000"/><rect x="1170.4" y="870.6999999999999" width="2.4" height="5.6" fill="#fff"/><rect x="1170.4" y="877.5" width="2.4" height="2.2" fill="#fff"/><circle cx="1166.5" cy="900.9" r="4.8" fill="#ccc"/><circle cx="1172.5" cy="898.4" r="5" fill="#ddd"/><circle cx="1178" cy="902.9" r="4" fill="#ccc"/><circle cx="1173" cy="906.4" r="7" fill="#d41c1c"/><path d="M1176 904.9 Q1178 898.9 1180 899.9 Q1183 903.9 1181 906.9 Z" fill="#ff9a00"/><rect x="1172" y="902.1" width="2.4" height="5.4" fill="#fff"/><rect x="1172" y="908.6999999999999" width="2.4" height="2.2" fill="#fff"/><circle cx="1172.5" cy="934.0999999999999" r="7.5" fill="#8a8a8a"/><circle cx="1172.5" cy="932.0999999999999" r="5.5" fill="#aaa" opacity=".6"/><rect x="1171.3" y="929.3999999999999" width="2.4" height="5.8" fill="#fff"/><rect x="1171.3" y="936.1999999999999" width="2.4" height="2.2" fill="#fff"/></svg>
</body></html>
